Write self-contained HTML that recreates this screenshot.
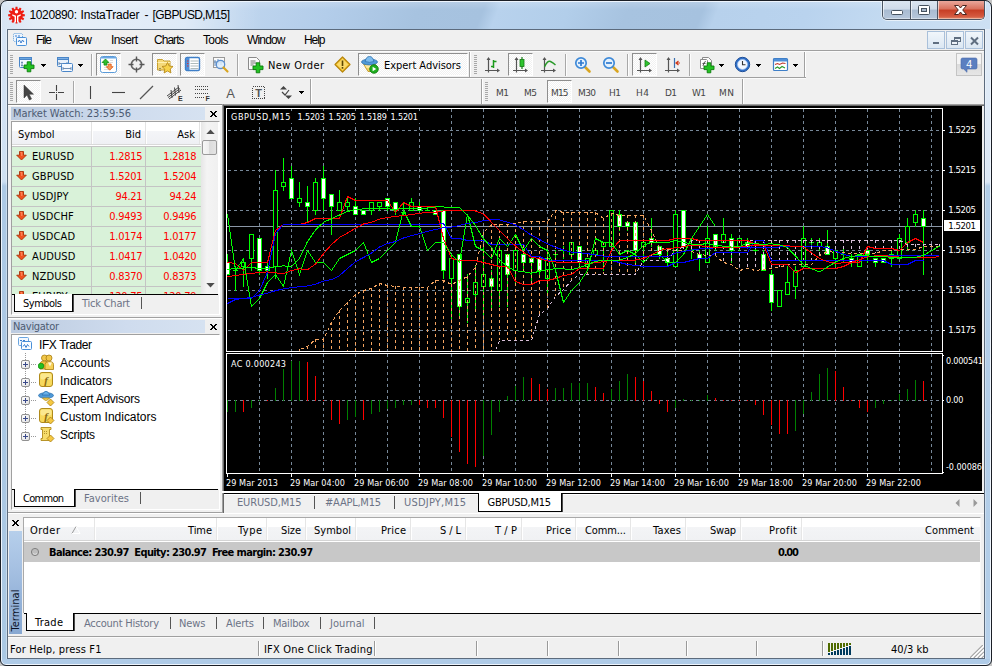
<!DOCTYPE html><html lang="en"><head><meta charset="utf-8"><title>1020890: InstaTrader - [GBPUSD,M15]</title><style>
html,body{margin:0;padding:0;background:#c4c4c4;}
body{width:992px;height:666px;overflow:hidden;position:relative;font-family:"Liberation Sans",sans-serif;font-size:12px;}
#app{position:absolute;left:0;top:0;width:992px;height:666px;overflow:hidden;}
#app div,#app span.t,#app svg.i{position:absolute;}
span.t{white-space:pre;display:block;}
#win{left:0;top:0;width:992px;height:666px;box-sizing:border-box;border:1px solid #1b1f26;border-radius:7px 7px 6px 6px;
 background:#afcbe7;box-shadow:inset 0 0 0 1px rgba(245,250,255,.9);}
#fl{left:2px;top:29px;width:5px;height:630px;background:linear-gradient(#d6e4f4 0,#cfe0f2 150px,#cbddf1 153px,#adc9e5 157px,#aac8e3 100%);box-shadow:inset -1px 0 0 rgba(255,255,255,.35);}
#fr{left:985px;top:29px;width:5px;height:630px;background:linear-gradient(#e0ebf7 0,#dde9f6 153px,#b4cfe9 157px,#b2cde8 560px,#b8d2ec 100%);box-shadow:inset 1px 0 0 rgba(255,255,255,.35);}
#cap{left:2px;top:2px;width:988px;height:27px;border-radius:5px 5px 0 0;
 background:linear-gradient(180deg,rgba(255,255,255,.18),rgba(255,255,255,0) 30%),linear-gradient(112deg,#d5e3f3 0,#c4d9f0 20%,#b3cdea 33%,#a7c3e0 42%,#a6c2df 48.5%,#b8d2ed 50%,#b2ceea 57%,#a7c3e0 63%,#a6c2df 70.5%,#b7d1ec 72%,#b9d3ee 81%,#c3daf1 89%,#cde0f3 100%);}
#glow{left:2px;top:2px;width:260px;height:27px;background:linear-gradient(90deg,rgba(255,255,255,.05) 0,rgba(255,255,255,.4) 12%,rgba(255,255,255,.5) 30%,rgba(255,255,255,.45) 70%,rgba(255,255,255,.1) 92%,rgba(255,255,255,0) 100%);}
#cbtn{left:882px;top:1px;width:103px;height:19px;border:1px solid #4b5563;border-top:none;border-radius:0 0 5px 5px;box-sizing:border-box;overflow:hidden;
 background:linear-gradient(#dce6f1 0,#cfdbe9 45%,#a9bbd1 50%,#b6c7db 100%);box-shadow:0 1px 0 rgba(255,255,255,.6),1px 0 0 rgba(255,255,255,.45),-1px 0 0 rgba(255,255,255,.45);}
#cbtn .cb{top:0;height:18px;border-right:1px solid #4b5563;box-sizing:border-box;box-shadow:inset 1px 0 0 rgba(255,255,255,.6),inset 0 -1px 0 rgba(255,255,255,.4);}
#cbtn .cx{border-right:none;background:linear-gradient(#e9a79b 0,#d8705c 45%,#c63d24 50%,#d4593f 85%,#e08a6a 100%);}
</style></head><body><div id="app">
<div id="win"></div>
<div id="cap"></div><div id="fl"></div><div id="fr"></div>
<div id="glow"></div>
<div style="left:7px;top:29px;width:978px;height:630px;border:1px solid #5c6b7d;box-sizing:border-box;background:#f0f0f0;"></div>
<svg class="i" style="left:6px;top:5px;" width="20" height="20" viewBox="0 0 20 20"><g transform="translate(10.5,10.2)"><polygon points="-0.97,-8.34 0.97,-8.34 1.18,-6.19 2.07,-5.95 3.34,-7.71 5.01,-6.74 4.12,-4.77 4.77,-4.12 6.74,-5.01 7.71,-3.34 5.95,-2.07 6.19,-1.18 8.34,-0.97 8.34,0.97 6.19,1.18 5.95,2.07 7.71,3.34 6.74,5.01 4.77,4.12 4.12,4.77 5.01,6.74 3.34,7.71 2.07,5.95 1.18,6.19 0.97,8.34 -0.97,8.34 -1.18,6.19 -2.07,5.95 -3.34,7.71 -5.01,6.74 -4.12,4.77 -4.77,4.12 -6.74,5.01 -7.71,3.34 -5.95,2.07 -6.19,1.18 -8.34,0.97 -8.34,-0.97 -6.19,-1.18 -5.95,-2.07 -7.71,-3.34 -6.74,-5.01 -4.77,-4.12 -4.12,-4.77 -5.01,-6.74 -3.34,-7.71 -2.07,-5.95 -1.18,-6.19" fill="#ee1c12"/><circle cx="0" cy="-3.4" r="1.7" fill="#fff"/><path d="M-4.2 -0.9 L-0.5 0.5 L-0.5 7.6 L-1.9 6.4 L-1.9 1.5 L-4.2 0.6 Z M4.2 -0.9 L0.5 0.5 L0.5 7.6 L1.9 6.4 L1.9 1.5 L4.2 0.6 Z" fill="#fff"/></g></svg>
<span class="t" style="left:29.50px;top:8px;font-family:'Liberation Sans',sans-serif;font-size:12px;line-height:14px;color:#000;letter-spacing:-0.364px;">1020890: </span>
<span class="t" style="left:80.50px;top:8px;font-family:'Liberation Sans',sans-serif;font-size:12px;line-height:14px;color:#000;letter-spacing:-0.191px;">InstaTrader </span>
<span class="t" style="left:144.50px;top:8px;font-family:'Liberation Sans',sans-serif;font-size:12px;line-height:14px;color:#000;">- </span>
<span class="t" style="left:152.50px;top:8px;font-family:'Liberation Sans',sans-serif;font-size:12px;line-height:14px;color:#000;letter-spacing:-0.593px;">[GBPUSD,M15]</span>
<div id="cbtn"><div class="cb" style="left:0;width:28px"></div><div class="cb" style="left:28px;width:27px"></div><div class="cb cx" style="left:55px;width:47px"></div></div>
<svg class="i" style="left:882px;top:0px;" width="103" height="20" viewBox="0 0 103 20"><rect x="9.500" y="10.500" width="11" height="4" rx="1" fill="#fff" stroke="#46525f" stroke-width="1"/><rect x="36.500" y="5.500" width="11" height="9" rx="1" fill="#fff" stroke="#46525f" stroke-width="1"/><rect x="39.500" y="8.500" width="5" height="3" fill="#a9b8ca" stroke="#46525f" stroke-width="1"/><path d="M72.500 5.500 L76.500 5.500 L78.500 8 L80.500 5.500 L84.500 5.500 L80.700 10 L84.500 14.500 L80.500 14.500 L78.500 12 L76.500 14.500 L72.500 14.500 L76.300 10 Z" fill="#fff" stroke="#4a2620" stroke-width="1" stroke-linejoin="round"/></svg>
<div style="left:8px;top:50px;width:976px;height:1px;background:#a0a0a0;"></div>
<svg class="i" style="left:11px;top:31px;" width="18" height="18" viewBox="0 0 18 18"><rect x="2.5" y="2.5" width="9" height="8" rx="1" fill="#eef5fd" stroke="#5b9bd8" stroke-dasharray="1 1"/><rect x="5.5" y="6.5" width="10" height="8" rx="1" fill="#f6faff" stroke="#4a90d8"/><path d="M7 11 l1.5 -2 l1.5 3 l1.5 -3 l1.5 2" fill="none" stroke="#3a7fd0" stroke-width="1"/><path d="M4 5 h2 M7 5 h2" stroke="#3a7fd0" stroke-width="1"/></svg>
<span class="t" style="left:36.00px;top:33px;font-family:'Liberation Sans',sans-serif;font-size:12px;line-height:14px;color:#000;letter-spacing:-1.112px;">File</span>
<span class="t" style="left:69.00px;top:33px;font-family:'Liberation Sans',sans-serif;font-size:12px;line-height:14px;color:#000;letter-spacing:-0.931px;">View</span>
<span class="t" style="left:111.00px;top:33px;font-family:'Liberation Sans',sans-serif;font-size:12px;line-height:14px;color:#000;letter-spacing:-0.602px;">Insert</span>
<span class="t" style="left:154.00px;top:33px;font-family:'Liberation Sans',sans-serif;font-size:12px;line-height:14px;color:#000;letter-spacing:-0.969px;">Charts</span>
<span class="t" style="left:203.00px;top:33px;font-family:'Liberation Sans',sans-serif;font-size:12px;line-height:14px;color:#000;letter-spacing:-0.628px;">Tools</span>
<span class="t" style="left:247.00px;top:33px;font-family:'Liberation Sans',sans-serif;font-size:12px;line-height:14px;color:#000;letter-spacing:-0.836px;">Window</span>
<span class="t" style="left:304.00px;top:33px;font-family:'Liberation Sans',sans-serif;font-size:12px;line-height:14px;color:#000;letter-spacing:-1.060px;">Help</span>
<div style="left:927px;top:31px;width:18px;height:18px;background:linear-gradient(#f1f6fb,#dbe7f3);border:1px solid #a9c0da;box-sizing:border-box;"></div>
<div style="left:946px;top:31px;width:18px;height:18px;background:linear-gradient(#f1f6fb,#dbe7f3);border:1px solid #a9c0da;box-sizing:border-box;"></div>
<div style="left:965px;top:31px;width:18px;height:18px;background:linear-gradient(#f1f6fb,#dbe7f3);border:1px solid #a9c0da;box-sizing:border-box;"></div>
<svg class="i" style="left:927.5px;top:32px;" width="55" height="17" viewBox="0 0 55 17"><rect x="5" y="10" width="6" height="2" fill="#5f6e80"/><rect x="26.5" y="5.500" width="6" height="4" fill="none" stroke="#5f6e80"/><rect x="26" y="5" width="7" height="2" fill="#5f6e80"/><rect x="23.5" y="8.5" width="6" height="4" fill="#eef3f9" stroke="#5f6e80"/><rect x="23" y="8" width="7" height="2" fill="#5f6e80"/><path d="M43 5.500 L50 12.5 M50 5.500 L43 12.5" stroke="#5f6e80" stroke-width="2"/></svg>
<div style="left:8px;top:51px;width:976px;height:1px;background:#fbfbfb;"></div>
<div style="left:8px;top:77px;width:798px;height:1px;background:#a0a0a0;"></div>
<div style="left:8px;top:78px;width:798px;height:1px;background:#fbfbfb;"></div>
<svg class="i" style="left:10px;top:55px;" width="3" height="20" viewBox="0 0 3 20"><rect x="0" y="0" width="3" height="1" fill="#a8a8a8"/><rect x="0" y="2" width="3" height="1" fill="#a8a8a8"/><rect x="0" y="4" width="3" height="1" fill="#a8a8a8"/><rect x="0" y="6" width="3" height="1" fill="#a8a8a8"/><rect x="0" y="8" width="3" height="1" fill="#a8a8a8"/><rect x="0" y="10" width="3" height="1" fill="#a8a8a8"/><rect x="0" y="12" width="3" height="1" fill="#a8a8a8"/><rect x="0" y="14" width="3" height="1" fill="#a8a8a8"/><rect x="0" y="16" width="3" height="1" fill="#a8a8a8"/><rect x="0" y="18" width="3" height="1" fill="#a8a8a8"/></svg>
<svg class="i" style="left:18px;top:56px;overflow:visible;" width="17" height="17" viewBox="0 0 17 17"><rect x="1.5" y="1.5" width="12" height="10" rx="1" fill="#f4f9ff" stroke="#4a86c8"/><rect x="1.5" y="1.5" width="12" height="2" fill="#6aa5e0" stroke="#4a86c8"/><path d="M4 5.500v5 M3 6.500h2 M3 9.500h2" stroke="#6f8fb5" stroke-width="1" fill="none"/><path d="M6 9h3.200v-3.200h3.600v3.200h3.200v3.600h-3.200v3.200h-3.600v-3.200h-3.200z" fill="#22c322" stroke="#0a7a0a" stroke-width="0.9" stroke-linejoin="round"/></svg>
<svg class="i" style="left:41px;top:64px;shape-rendering:crispEdges;" width="5" height="3" viewBox="0 0 5 3"><rect x="0" y="0" width="5" height="1"/><rect x="1" y="1" width="3" height="1"/><rect x="2" y="2" width="1" height="1"/></svg>
<svg class="i" style="left:56px;top:56px;overflow:visible;" width="17" height="17" viewBox="0 0 17 17"><rect x="1.5" y="1.5" width="11" height="9" rx="1" fill="#e8f1fb" stroke="#4a86c8"/><rect x="1.5" y="1.5" width="11" height="2" fill="#7fb0e4" stroke="#4a86c8"/><path d="M3 7.500h8 M3 6v3 M11 6v3" stroke="#6f8fb5" fill="none"/><rect x="5.5" y="7.5" width="11" height="8" rx="1" fill="#f4f9ff" stroke="#4a86c8"/><path d="M7 12.500h8 M7 11v3 M15 11v3" stroke="#6f8fb5" fill="none"/></svg>
<svg class="i" style="left:78px;top:64px;shape-rendering:crispEdges;" width="5" height="3" viewBox="0 0 5 3"><rect x="0" y="0" width="5" height="1"/><rect x="1" y="1" width="3" height="1"/><rect x="2" y="2" width="1" height="1"/></svg>
<div style="left:91px;top:54px;width:1px;height:22px;background:#a8a8a8;"></div>
<div style="left:92px;top:54px;width:1px;height:22px;background:#fdfdfd;"></div>
<div style="left:96px;top:53px;width:25px;height:23px;background:#fff;border:1px solid #8e8e8e;border-right-color:#fff;border-bottom-color:#fff;box-sizing:border-box;background-image:repeating-conic-gradient(#ffffff 0% 25%, #f1f1f1 0% 50%);background-size:2px 2px;"></div>
<svg class="i" style="left:100px;top:56px;overflow:visible;" width="17" height="17" viewBox="0 0 17 17"><rect x="0.500" y="0.500" width="16" height="16" rx="2" fill="#fff" stroke="#5b9bd8" stroke-width="1"/><rect x="1" y="1" width="15" height="1.500" fill="#6aa8e4"/><path d="M4 11.500h5 M4 13.500h5 M10 4.500h3 M10 6.500h3" stroke="#dcdcdc" stroke-width="1"/><path d="M5.500 3 l3.400 3.500 h-1.900 v2.600 h-3 v-2.600 h-1.900 z" fill="#2fbe2f" stroke="#128a12" stroke-width="0.8" stroke-linejoin="round"/><path d="M9.700 14.200 l3.400 -3.500 h-1.900 v-2.600 h-3 v2.600 h-1.900 z" fill="#f59a5a" stroke="#e0560f" stroke-width="0.8" stroke-linejoin="round"/></svg>
<svg class="i" style="left:128px;top:56px;overflow:visible;" width="17" height="17" viewBox="0 0 17 17"><circle cx="8.5" cy="8.5" r="5.200" fill="none" stroke="#666" stroke-width="1.6"/><path d="M8.500 0.500v5 M8.500 11.500v5 M0.500 8.500h5 M11.500 8.500h5" stroke="#555" stroke-width="1.4"/></svg>
<div style="left:152px;top:53px;width:25px;height:23px;background:#fff;border:1px solid #8e8e8e;border-right-color:#fff;border-bottom-color:#fff;box-sizing:border-box;background-image:repeating-conic-gradient(#ffffff 0% 25%, #f1f1f1 0% 50%);background-size:2px 2px;"></div>
<svg class="i" style="left:156px;top:56px;overflow:visible;" width="17" height="17" viewBox="0 0 17 17"><path d="M1.500 3.500 h5 l1.500 1.500 h6 v9 h-12.500 z" fill="#f5d978" stroke="#c8a030"/><path d="M1.500 6.500 h12.500" stroke="#fff0b0"/><path d="M4 12 v4" stroke="#444" stroke-dasharray="1 1"/><path d="M11.500 6.500 l1.700 3.500 3.800 0.500 -2.800 2.600 0.700 3.800 -3.400 -1.900 -3.400 1.900 0.700 -3.800 -2.800 -2.600 3.800 -0.500z" fill="#f7d24a" stroke="#b88a1a" stroke-width="0.9"/></svg>
<div style="left:180px;top:53px;width:25px;height:23px;background:#fff;border:1px solid #8e8e8e;border-right-color:#fff;border-bottom-color:#fff;box-sizing:border-box;background-image:repeating-conic-gradient(#ffffff 0% 25%, #f1f1f1 0% 50%);background-size:2px 2px;"></div>
<svg class="i" style="left:184px;top:56px;overflow:visible;" width="17" height="17" viewBox="0 0 17 17"><rect x="1.5" y="1.5" width="14" height="13" rx="1.5" fill="#fff" stroke="#3f7fc8" stroke-width="1.4"/><rect x="2" y="2" width="3.500" height="12" fill="#4f8fd8"/><path d="M6.500 5h8 M6.500 7.500h8 M6.500 10h8 M6.500 12.500h8" stroke="#9aa" stroke-width="0.8"/><path d="M3 5h1.500 M3 7.500h1.500 M3 10h1.500" stroke="#d33" stroke-width="1"/></svg>
<svg class="i" style="left:212px;top:56px;overflow:visible;" width="17" height="17" viewBox="0 0 17 17"><rect x="1.5" y="1.5" width="11" height="10" fill="#fafafa" stroke="#999"/><path d="M3 4v6 M6 3v6 M9 4v5 M2 6h9" stroke="#5580b0" stroke-width="0.9"/><circle cx="8.5" cy="8.5" r="4.200" fill="#dcecfb" fill-opacity="0.85" stroke="#5b8fd0" stroke-width="1.3"/><path d="M11.500 11.500 l4 4" stroke="#d9a520" stroke-width="2.200" stroke-linecap="round"/></svg>
<div style="left:237px;top:54px;width:1px;height:22px;background:#a8a8a8;"></div>
<div style="left:238px;top:54px;width:1px;height:22px;background:#fdfdfd;"></div>
<svg class="i" style="left:246px;top:56px;overflow:visible;" width="17" height="17" viewBox="0 0 17 17"><path d="M2.500 1.500 h8 l3 3 v9 h-11 z" fill="#fbfbfb" stroke="#8a8a8a"/><path d="M4.500 5h5 M4.500 7h6 M4.500 9h3" stroke="#777" stroke-width="1"/><path d="M7 10h3.200v-3.200h3.600v3.200h3.200v3.600h-3.200v3.200h-3.600v-3.200h-3.200z" fill="#22c322" stroke="#0a7a0a" stroke-width="0.9" stroke-linejoin="round"/></svg>
<span class="t" style="left:268.00px;top:59px;font-family:'DejaVu Sans Condensed','Liberation Sans',sans-serif;font-size:11px;line-height:13px;color:#000;letter-spacing:0.396px;">New Order</span>
<svg class="i" style="left:334px;top:56px;overflow:visible;" width="17" height="17" viewBox="0 0 17 17"><path d="M8.500 1 L16 8.500 L8.500 16 L1 8.500 Z" fill="#f7c93a" stroke="#b8860b" stroke-width="1.200" stroke-linejoin="round"/><path d="M8.500 3 L14 8.500 L8.500 14 L3 8.500 Z" fill="#fde68a" fill-opacity="0.6"/><rect x="7.700" y="4.500" width="1.600" height="5.500" fill="#5a4500"/><rect x="7.700" y="11" width="1.600" height="1.700" fill="#5a4500"/></svg>
<div style="left:358px;top:53px;width:110px;height:23px;background:#fff;border:1px solid #8e8e8e;border-right-color:#fff;border-bottom-color:#fff;box-sizing:border-box;background-image:repeating-conic-gradient(#ffffff 0% 25%, #f1f1f1 0% 50%);background-size:2px 2px;"></div>
<svg class="i" style="left:361px;top:56px;overflow:visible;" width="18" height="18" viewBox="0 0 18 18"><path d="M2.500 8 h12 l-2.500 7.500 h-5 z" fill="#f5d060" stroke="#b8901a" stroke-width="0.8"/><path d="M4 9 h6 l-1 3 h-3.500 z" fill="#fbe9a0"/><ellipse cx="8.500" cy="6" rx="8" ry="2.900" fill="#4f9ad8" stroke="#2f72b0" stroke-width="0.8"/><path d="M4.200 5.500 q0.800 -5 4.300 -5 q3.500 0 4.300 5 q-4.300 1.800 -8.600 0 z" fill="#7cbcee" stroke="#2f72b0" stroke-width="0.8"/><circle cx="13" cy="13" r="4.300" fill="#1fae1f" stroke="#0d7a0d" stroke-width="0.8"/><path d="M11.600 10.700 l3.700 2.300 l-3.700 2.300 z" fill="#fff"/></svg>
<span class="t" style="left:384.00px;top:59px;font-family:'DejaVu Sans Condensed','Liberation Sans',sans-serif;font-size:11px;line-height:13px;color:#000;letter-spacing:-0.033px;">Expert Advisors</span>
<div style="left:469px;top:52px;width:1px;height:25px;background:#a0a0a0;"></div>
<div style="left:470px;top:52px;width:1px;height:25px;background:#fff;"></div>
<svg class="i" style="left:474px;top:55px;" width="3" height="20" viewBox="0 0 3 20"><rect x="0" y="0" width="3" height="1" fill="#a8a8a8"/><rect x="0" y="2" width="3" height="1" fill="#a8a8a8"/><rect x="0" y="4" width="3" height="1" fill="#a8a8a8"/><rect x="0" y="6" width="3" height="1" fill="#a8a8a8"/><rect x="0" y="8" width="3" height="1" fill="#a8a8a8"/><rect x="0" y="10" width="3" height="1" fill="#a8a8a8"/><rect x="0" y="12" width="3" height="1" fill="#a8a8a8"/><rect x="0" y="14" width="3" height="1" fill="#a8a8a8"/><rect x="0" y="16" width="3" height="1" fill="#a8a8a8"/><rect x="0" y="18" width="3" height="1" fill="#a8a8a8"/></svg>
<svg class="i" style="left:484px;top:56px;overflow:visible;" width="17" height="17" viewBox="0 0 17 17"><path d="M4.500 2.500 v14 M1 14.500 h14" stroke="#555" stroke-width="1.200" fill="none"/><path d="M4.500 1 l-2 3 h4 z M16 14.500 l-3 -2 v4 z" fill="#555"/><path d="M9.500 4 v8 M9.500 5.500 h3 M7 10.500 h2.500" stroke="#1a9a1a" stroke-width="1.500" fill="none"/></svg>
<div style="left:508px;top:53px;width:25px;height:23px;background:#fff;border:1px solid #8e8e8e;border-right-color:#fff;border-bottom-color:#fff;box-sizing:border-box;background-image:repeating-conic-gradient(#ffffff 0% 25%, #f1f1f1 0% 50%);background-size:2px 2px;"></div>
<svg class="i" style="left:512px;top:56px;overflow:visible;" width="17" height="17" viewBox="0 0 17 17"><path d="M4.500 2.500 v14 M1 14.500 h14" stroke="#555" stroke-width="1.200" fill="none"/><path d="M4.500 1 l-2 3 h4 z M16 14.500 l-3 -2 v4 z" fill="#555"/><path d="M10 1 v12" stroke="#157a15" stroke-width="1.200"/><rect x="8" y="3.500" width="4" height="7" fill="#2fc52f" stroke="#157a15" stroke-width="0.8"/></svg>
<svg class="i" style="left:540px;top:56px;overflow:visible;" width="17" height="17" viewBox="0 0 17 17"><path d="M4.500 2.500 v14 M1 14.500 h14" stroke="#555" stroke-width="1.200" fill="none"/><path d="M4.500 1 l-2 3 h4 z M16 14.500 l-3 -2 v4 z" fill="#555"/><path d="M4.500 11 q3 -7 6 -5.500 t5 3.500" stroke="#2a9a2a" stroke-width="1.400" fill="none"/></svg>
<div style="left:565px;top:54px;width:1px;height:22px;background:#a8a8a8;"></div>
<div style="left:566px;top:54px;width:1px;height:22px;background:#fdfdfd;"></div>
<svg class="i" style="left:574px;top:56px;overflow:visible;" width="17" height="17" viewBox="0 0 17 17"><path d="M11 11 l4.500 4.500" stroke="#d9a520" stroke-width="2.600" stroke-linecap="round"/><circle cx="7" cy="7" r="5.200" fill="#e4f1fd" stroke="#3f8ad8" stroke-width="1.700"/><path d="M4 7h6 M7 4v6" stroke="#2f7ad0" stroke-width="1.700"/></svg>
<svg class="i" style="left:602px;top:56px;overflow:visible;" width="17" height="17" viewBox="0 0 17 17"><path d="M11 11 l4.500 4.500" stroke="#d9a520" stroke-width="2.600" stroke-linecap="round"/><circle cx="7" cy="7" r="5.200" fill="#e4f1fd" stroke="#3f8ad8" stroke-width="1.700"/><path d="M4 7h6" stroke="#2f7ad0" stroke-width="1.700"/></svg>
<div style="left:627px;top:54px;width:1px;height:22px;background:#a8a8a8;"></div>
<div style="left:628px;top:54px;width:1px;height:22px;background:#fdfdfd;"></div>
<div style="left:632px;top:53px;width:25px;height:23px;background:#fff;border:1px solid #8e8e8e;border-right-color:#fff;border-bottom-color:#fff;box-sizing:border-box;background-image:repeating-conic-gradient(#ffffff 0% 25%, #f1f1f1 0% 50%);background-size:2px 2px;"></div>
<svg class="i" style="left:636px;top:56px;overflow:visible;" width="17" height="17" viewBox="0 0 17 17"><path d="M4.500 2.500 v14 M1 14.500 h14" stroke="#555" stroke-width="1.200" fill="none"/><path d="M4.500 1 l-2 3 h4 z M16 14.500 l-3 -2 v4 z" fill="#555"/><path d="M9 4 l5 3.500 l-5 3.500 z" fill="#2fc52f" stroke="#157a15" stroke-width="0.8"/></svg>
<svg class="i" style="left:664px;top:56px;overflow:visible;" width="17" height="17" viewBox="0 0 17 17"><path d="M4.500 2.500 v14 M1 14.500 h14" stroke="#555" stroke-width="1.200" fill="none"/><path d="M4.500 1 l-2 3 h4 z M16 14.500 l-3 -2 v4 z" fill="#555"/><path d="M10.500 2 v10" stroke="#3a6fb0" stroke-width="1.200"/><path d="M16 7 h-3.500 M14.500 5 l-2.500 2 l2.500 2" stroke="#d03a1a" stroke-width="1.200" fill="none"/></svg>
<div style="left:689px;top:54px;width:1px;height:22px;background:#a8a8a8;"></div>
<div style="left:690px;top:54px;width:1px;height:22px;background:#fdfdfd;"></div>
<svg class="i" style="left:698px;top:56px;overflow:visible;" width="17" height="17" viewBox="0 0 17 17"><path d="M4.500 1.500 h6 l3 3 v8 h-9 z" fill="#fbfbfb" stroke="#8a8a8a"/><path d="M2.500 3.500 h6 l1 1 v8 h-7 z" fill="#fff" stroke="#8a8a8a"/><path d="M5 10 q1.500 -6 3 -4 M4.500 7.500 h3" stroke="#555" stroke-width="1" fill="none"/><path d="M6 10h3.200v-3.200h3.600v3.200h3.200v3.600h-3.200v3.200h-3.600v-3.200h-3.200z" fill="#22c322" stroke="#0a7a0a" stroke-width="0.9" stroke-linejoin="round"/></svg>
<svg class="i" style="left:719px;top:64px;shape-rendering:crispEdges;" width="5" height="3" viewBox="0 0 5 3"><rect x="0" y="0" width="5" height="1"/><rect x="1" y="1" width="3" height="1"/><rect x="2" y="2" width="1" height="1"/></svg>
<svg class="i" style="left:734px;top:56px;overflow:visible;" width="17" height="17" viewBox="0 0 17 17"><circle cx="8.500" cy="8.500" r="7.200" fill="#2f6fc8" stroke="#1f4f98" stroke-width="1"/><circle cx="8.500" cy="8.500" r="5" fill="#f4f8ff" stroke="#9ec0ee" stroke-width="0.8"/><path d="M8.500 5 v3.700 h3" stroke="#333" stroke-width="1.100" fill="none"/></svg>
<svg class="i" style="left:756px;top:64px;shape-rendering:crispEdges;" width="5" height="3" viewBox="0 0 5 3"><rect x="0" y="0" width="5" height="1"/><rect x="1" y="1" width="3" height="1"/><rect x="2" y="2" width="1" height="1"/></svg>
<svg class="i" style="left:772px;top:56px;overflow:visible;" width="17" height="17" viewBox="0 0 17 17"><rect x="1.500" y="2.500" width="14" height="12" rx="1" fill="#fff" stroke="#3f7fc8" stroke-width="1.200"/><rect x="2" y="3" width="13" height="2.500" fill="#4f8fd8"/><path d="M3 8.500 l2.500 -1 2 1 3 -1.500 3 0.500" stroke="#c0392b" stroke-width="1.100" fill="none"/><path d="M3 12.500 l2.500 -1.500 2 1.500 2.500 -2 3 1.500" stroke="#2a9a2a" stroke-width="1.100" fill="none"/></svg>
<svg class="i" style="left:793px;top:64px;shape-rendering:crispEdges;" width="5" height="3" viewBox="0 0 5 3"><rect x="0" y="0" width="5" height="1"/><rect x="1" y="1" width="3" height="1"/><rect x="2" y="2" width="1" height="1"/></svg>
<div style="left:804px;top:52px;width:1px;height:25px;background:#a0a0a0;"></div>
<div style="left:805px;top:52px;width:1px;height:25px;background:#fff;"></div>
<div style="left:956px;top:53px;width:26px;height:23px;background:linear-gradient(#f4f4f4 50%,#dcdcdc 50%,#e6e6e6);border:1px solid #c4c4c4;box-sizing:border-box;"></div>
<svg class="i" style="left:960px;top:57px;" width="18" height="16" viewBox="0 0 18 16"><path d="M2.500 1 h13 q1.500 0 1.500 1.500 v8 q0 1.500 -1.500 1.500 h-8.500 v3.300 l-3.300 -3.300 h-1.200 q-1.500 0 -1.500 -1.500 v-8 q0 -1.500 1.500 -1.500 z" fill="#5b7fc0" stroke="#4a6aa8" stroke-width="0.6"/><text x="9.200" y="10.500" font-family="Liberation Sans,sans-serif" font-size="10.500" fill="#fff" text-anchor="middle">4</text></svg>
<svg class="i" style="left:10px;top:82px;" width="3" height="20" viewBox="0 0 3 20"><rect x="0" y="0" width="3" height="1" fill="#a8a8a8"/><rect x="0" y="2" width="3" height="1" fill="#a8a8a8"/><rect x="0" y="4" width="3" height="1" fill="#a8a8a8"/><rect x="0" y="6" width="3" height="1" fill="#a8a8a8"/><rect x="0" y="8" width="3" height="1" fill="#a8a8a8"/><rect x="0" y="10" width="3" height="1" fill="#a8a8a8"/><rect x="0" y="12" width="3" height="1" fill="#a8a8a8"/><rect x="0" y="14" width="3" height="1" fill="#a8a8a8"/><rect x="0" y="16" width="3" height="1" fill="#a8a8a8"/><rect x="0" y="18" width="3" height="1" fill="#a8a8a8"/></svg>
<div style="left:16px;top:80px;width:25px;height:23px;background:#fff;border:1px solid #8e8e8e;border-right-color:#fff;border-bottom-color:#fff;box-sizing:border-box;background-image:repeating-conic-gradient(#ffffff 0% 25%, #f1f1f1 0% 50%);background-size:2px 2px;"></div>
<svg class="i" style="left:20px;top:84px;overflow:visible;" width="17" height="17" viewBox="0 0 17 17"><path d="M4 1 v13 l3 -3 l2.300 5 l2.200 -1 l-2.300 -4.800 h4.300 z" fill="#444" stroke="#333" stroke-width="0.5"/></svg>
<svg class="i" style="left:48px;top:84px;overflow:visible;" width="17" height="17" viewBox="0 0 17 17"><path d="M8.500 1 v6 M8.500 10 v6 M1 8.500 h6 M10 8.500 h6" stroke="#444" stroke-width="1.100"/><rect x="8" y="8" width="1" height="1" fill="#444"/></svg>
<div style="left:73px;top:81px;width:1px;height:22px;background:#a8a8a8;"></div>
<div style="left:74px;top:81px;width:1px;height:22px;background:#fdfdfd;"></div>
<svg class="i" style="left:82px;top:84px;overflow:visible;" width="17" height="17" viewBox="0 0 17 17"><path d="M8.500 2 v13" stroke="#444" stroke-width="1.100"/></svg>
<svg class="i" style="left:110px;top:84px;overflow:visible;" width="17" height="17" viewBox="0 0 17 17"><path d="M2 8.500 h13" stroke="#444" stroke-width="1.100"/></svg>
<svg class="i" style="left:138px;top:84px;overflow:visible;" width="17" height="17" viewBox="0 0 17 17"><path d="M2 15 L15 2" stroke="#555" stroke-width="1.200"/></svg>
<svg class="i" style="left:166px;top:84px;overflow:visible;" width="17" height="17" viewBox="0 0 17 17"><path d="M1 12 L13 3 M3 15 L15 6 M2 13.500 L14 4.500" stroke="#444" stroke-width="1"/><path d="M5 6 l1 8 M8.500 3.500 l1 8 M12 1 l1 8" stroke="#444" stroke-width="1"/><text x="12" y="17" font-family="Liberation Sans,sans-serif" font-size="7" font-weight="bold" fill="#333">E</text></svg>
<svg class="i" style="left:194px;top:84px;overflow:visible;" width="17" height="17" viewBox="0 0 17 17"><path d="M1 2.500 h14 M1 5.500 h14 M1 9.500 h14 M1 13.500 h10" stroke="#444" stroke-width="1" stroke-dasharray="1 1"/><text x="11.500" y="17" font-family="Liberation Sans,sans-serif" font-size="7" font-weight="bold" fill="#333">F</text></svg>
<svg class="i" style="left:222px;top:84px;overflow:visible;" width="17" height="17" viewBox="0 0 17 17"><text x="8.500" y="14" font-family="Liberation Sans,sans-serif" font-size="13" fill="#555" text-anchor="middle">A</text></svg>
<svg class="i" style="left:250px;top:84px;overflow:visible;" width="17" height="17" viewBox="0 0 17 17"><rect x="2.500" y="2.500" width="12" height="12" fill="none" stroke="#444" stroke-width="1" stroke-dasharray="1 1" shape-rendering="crispEdges"/><text x="8.500" y="13" font-family="Liberation Sans,sans-serif" font-size="11" font-weight="bold" fill="#555" text-anchor="middle">T</text></svg>
<svg class="i" style="left:278px;top:84px;overflow:visible;" width="17" height="17" viewBox="0 0 17 17"><path d="M2 5.500 l3.500 -3.500 l3.500 3.500 z M14 11.500 l-3.500 3.500 l-3.500 -3.500 z" fill="#444"/><path d="M4 8 l3 3 l4 -5" stroke="#444" stroke-width="1.200" fill="none"/></svg>
<svg class="i" style="left:299px;top:91px;shape-rendering:crispEdges;" width="5" height="3" viewBox="0 0 5 3"><rect x="0" y="0" width="5" height="1"/><rect x="1" y="1" width="3" height="1"/><rect x="2" y="2" width="1" height="1"/></svg>
<div style="left:310px;top:79px;width:1px;height:25px;background:#a0a0a0;"></div>
<div style="left:311px;top:79px;width:1px;height:25px;background:#fff;"></div>
<div style="left:481px;top:79px;width:1px;height:25px;background:#a0a0a0;"></div>
<div style="left:482px;top:79px;width:1px;height:25px;background:#fff;"></div>
<svg class="i" style="left:485px;top:82px;" width="3" height="20" viewBox="0 0 3 20"><rect x="0" y="0" width="3" height="1" fill="#a8a8a8"/><rect x="0" y="2" width="3" height="1" fill="#a8a8a8"/><rect x="0" y="4" width="3" height="1" fill="#a8a8a8"/><rect x="0" y="6" width="3" height="1" fill="#a8a8a8"/><rect x="0" y="8" width="3" height="1" fill="#a8a8a8"/><rect x="0" y="10" width="3" height="1" fill="#a8a8a8"/><rect x="0" y="12" width="3" height="1" fill="#a8a8a8"/><rect x="0" y="14" width="3" height="1" fill="#a8a8a8"/><rect x="0" y="16" width="3" height="1" fill="#a8a8a8"/><rect x="0" y="18" width="3" height="1" fill="#a8a8a8"/></svg>
<div style="left:547px;top:80px;width:25px;height:23px;background:#fff;border:1px solid #8e8e8e;border-right-color:#fff;border-bottom-color:#fff;box-sizing:border-box;background-image:repeating-conic-gradient(#ffffff 0% 25%, #f1f1f1 0% 50%);background-size:2px 2px;"></div>
<span class="t" style="left:496.00px;top:88px;font-family:'DejaVu Sans','Liberation Sans',sans-serif;font-size:9px;line-height:10px;color:#454545;letter-spacing:-0.491px;">M1</span>
<span class="t" style="left:524.00px;top:88px;font-family:'DejaVu Sans','Liberation Sans',sans-serif;font-size:9px;line-height:10px;color:#454545;letter-spacing:-0.491px;">M5</span>
<span class="t" style="left:551.00px;top:88px;font-family:'DejaVu Sans','Liberation Sans',sans-serif;font-size:9px;line-height:10px;color:#454545;letter-spacing:-0.859px;">M15</span>
<span class="t" style="left:578.00px;top:88px;font-family:'DejaVu Sans','Liberation Sans',sans-serif;font-size:9px;line-height:10px;color:#454545;letter-spacing:-0.609px;">M30</span>
<span class="t" style="left:609.00px;top:88px;font-family:'DejaVu Sans','Liberation Sans',sans-serif;font-size:9px;line-height:10px;color:#454545;letter-spacing:-0.494px;">H1</span>
<span class="t" style="left:636.00px;top:88px;font-family:'DejaVu Sans','Liberation Sans',sans-serif;font-size:9px;line-height:10px;color:#454545;letter-spacing:0.506px;">H4</span>
<span class="t" style="left:665.00px;top:88px;font-family:'DejaVu Sans','Liberation Sans',sans-serif;font-size:9px;line-height:10px;color:#454545;letter-spacing:-0.656px;">D1</span>
<span class="t" style="left:692.00px;top:88px;font-family:'DejaVu Sans','Liberation Sans',sans-serif;font-size:9px;line-height:10px;color:#454545;letter-spacing:-0.625px;">W1</span>
<span class="t" style="left:719.00px;top:88px;font-family:'DejaVu Sans','Liberation Sans',sans-serif;font-size:9px;line-height:10px;color:#454545;letter-spacing:0.502px;">MN</span>
<div style="left:742px;top:79px;width:1px;height:25px;background:#a0a0a0;"></div>
<div style="left:743px;top:79px;width:1px;height:25px;background:#fff;"></div>
<div style="left:8px;top:104px;width:976px;height:1px;background:#858585;"></div>
<div style="left:8px;top:105px;width:214px;height:1px;background:#fff;"></div>
<div style="left:11px;top:107px;width:194px;height:13px;background:linear-gradient(90deg,#bccbe0,#cfdcee 60%,#d6e2f1);"></div>
<span class="t" style="left:13.00px;top:107px;font-family:'DejaVu Sans Condensed','Liberation Sans',sans-serif;font-size:11px;line-height:13px;color:#4d5b72;letter-spacing:-0.037px;">Market Watch: 23:59:56</span>
<svg class="i" style="left:210px;top:111px;shape-rendering:crispEdges;" width="7" height="6" viewBox="0 0 7 6"><rect x="0" y="0" width="2" height="1"/><rect x="5" y="0" width="2" height="1"/><rect x="1" y="1" width="2" height="1"/><rect x="4" y="1" width="2" height="1"/><rect x="2" y="2" width="3" height="1"/><rect x="2" y="3" width="3" height="1"/><rect x="1" y="4" width="2" height="1"/><rect x="4" y="4" width="2" height="1"/><rect x="0" y="5" width="2" height="1"/><rect x="5" y="5" width="2" height="1"/></svg>
<div style="left:11px;top:121px;width:209px;height:194px;background:#f0f0f0;border:1px solid #a0a0a0;border-right-color:#fff;border-bottom-color:#fff;box-sizing:border-box;"></div>
<div style="left:12px;top:122px;width:207px;height:172px;background:#fff;"></div>
<div style="left:12px;top:122px;width:189px;height:22px;background:linear-gradient(#fff 40%,#f4f5f8 41%,#eff0f4);"></div>
<div style="left:12px;top:144px;width:189px;height:1px;background:#d9d9d9;"></div>
<div style="left:12px;top:145px;width:189px;height:1px;background:#fff;"></div>
<div style="left:92px;top:122px;width:1px;height:22px;background:#fff;"></div>
<div style="left:91px;top:122px;width:1px;height:22px;background:#e3e3e3;"></div>
<div style="left:146px;top:122px;width:1px;height:22px;background:#fff;"></div>
<div style="left:145px;top:122px;width:1px;height:22px;background:#e3e3e3;"></div>
<div style="left:200px;top:122px;width:1px;height:22px;background:#fff;"></div>
<div style="left:199px;top:122px;width:1px;height:22px;background:#e3e3e3;"></div>
<span class="t" style="left:18.00px;top:128px;font-family:'DejaVu Sans Condensed','Liberation Sans',sans-serif;font-size:11px;line-height:13px;color:#000;letter-spacing:-0.073px;">Symbol</span>
<span class="t" style="left:125.18px;top:128px;font-family:'DejaVu Sans Condensed','Liberation Sans',sans-serif;font-size:11px;line-height:13px;color:#000;">Bid</span>
<span class="t" style="left:177.35px;top:128px;font-family:'DejaVu Sans Condensed','Liberation Sans',sans-serif;font-size:11px;line-height:13px;color:#000;">Ask</span>
<div style="left:12px;top:146px;width:189px;height:148px;overflow:hidden;background:#d9f2d9">
<div style="left:0px;top:0px;width:189px;height:1px;background:#c4c4c4;"></div>
<svg class="i" style="left:4px;top:5px;" width="11" height="12" viewBox="0 0 11 12"><path d="M3.500 0.500 h4 v3.700 h2.800 l-4.800 4.800 l-4.800 -4.800 h2.800 z" fill="#f4511e" stroke="#a83208" stroke-width="0.9" stroke-linejoin="round"/><path d="M4.500 1.400 h1.300 v3.600" stroke="#ff9a6e" stroke-width="0.9" fill="none"/></svg>
<span class="t" style="left:20.00px;top:4px;font-family:'DejaVu Sans Condensed','Liberation Sans',sans-serif;font-size:11px;line-height:13px;color:#000;letter-spacing:0.120px;">EURUSD</span>
<span class="t" style="left:97.28px;top:4px;font-family:'DejaVu Sans Condensed','Liberation Sans',sans-serif;font-size:11px;line-height:13px;color:#ff0000;letter-spacing:-0.280px;">1.2815</span>
<span class="t" style="left:151.28px;top:4px;font-family:'DejaVu Sans Condensed','Liberation Sans',sans-serif;font-size:11px;line-height:13px;color:#ff0000;letter-spacing:-0.280px;">1.2818</span>
<div style="left:0px;top:20px;width:189px;height:1px;background:#c4c4c4;"></div>
<svg class="i" style="left:4px;top:25px;" width="11" height="12" viewBox="0 0 11 12"><path d="M3.500 0.500 h4 v3.700 h2.800 l-4.800 4.800 l-4.800 -4.800 h2.800 z" fill="#f4511e" stroke="#a83208" stroke-width="0.9" stroke-linejoin="round"/><path d="M4.500 1.400 h1.300 v3.600" stroke="#ff9a6e" stroke-width="0.9" fill="none"/></svg>
<span class="t" style="left:20.00px;top:24px;font-family:'DejaVu Sans Condensed','Liberation Sans',sans-serif;font-size:11px;line-height:13px;color:#000;letter-spacing:0.120px;">GBPUSD</span>
<span class="t" style="left:97.28px;top:24px;font-family:'DejaVu Sans Condensed','Liberation Sans',sans-serif;font-size:11px;line-height:13px;color:#ff0000;letter-spacing:-0.280px;">1.5201</span>
<span class="t" style="left:151.28px;top:24px;font-family:'DejaVu Sans Condensed','Liberation Sans',sans-serif;font-size:11px;line-height:13px;color:#ff0000;letter-spacing:-0.280px;">1.5204</span>
<div style="left:0px;top:40px;width:189px;height:1px;background:#c4c4c4;"></div>
<svg class="i" style="left:4px;top:45px;" width="11" height="12" viewBox="0 0 11 12"><path d="M3.500 0.500 h4 v3.700 h2.800 l-4.800 4.800 l-4.800 -4.800 h2.800 z" fill="#f4511e" stroke="#a83208" stroke-width="0.9" stroke-linejoin="round"/><path d="M4.500 1.400 h1.300 v3.600" stroke="#ff9a6e" stroke-width="0.9" fill="none"/></svg>
<span class="t" style="left:20.00px;top:44px;font-family:'DejaVu Sans Condensed','Liberation Sans',sans-serif;font-size:11px;line-height:13px;color:#000;letter-spacing:0.120px;">USDJPY</span>
<span class="t" style="left:103.58px;top:44px;font-family:'DejaVu Sans Condensed','Liberation Sans',sans-serif;font-size:11px;line-height:13px;color:#ff0000;letter-spacing:-0.350px;">94.21</span>
<span class="t" style="left:157.58px;top:44px;font-family:'DejaVu Sans Condensed','Liberation Sans',sans-serif;font-size:11px;line-height:13px;color:#ff0000;letter-spacing:-0.350px;">94.24</span>
<div style="left:0px;top:60px;width:189px;height:1px;background:#c4c4c4;"></div>
<svg class="i" style="left:4px;top:65px;" width="11" height="12" viewBox="0 0 11 12"><path d="M3.500 0.500 h4 v3.700 h2.800 l-4.800 4.800 l-4.800 -4.800 h2.800 z" fill="#f4511e" stroke="#a83208" stroke-width="0.9" stroke-linejoin="round"/><path d="M4.500 1.400 h1.300 v3.600" stroke="#ff9a6e" stroke-width="0.9" fill="none"/></svg>
<span class="t" style="left:20.00px;top:64px;font-family:'DejaVu Sans Condensed','Liberation Sans',sans-serif;font-size:11px;line-height:13px;color:#000;letter-spacing:0.120px;">USDCHF</span>
<span class="t" style="left:97.28px;top:64px;font-family:'DejaVu Sans Condensed','Liberation Sans',sans-serif;font-size:11px;line-height:13px;color:#ff0000;letter-spacing:-0.280px;">0.9493</span>
<span class="t" style="left:151.28px;top:64px;font-family:'DejaVu Sans Condensed','Liberation Sans',sans-serif;font-size:11px;line-height:13px;color:#ff0000;letter-spacing:-0.280px;">0.9496</span>
<div style="left:0px;top:80px;width:189px;height:1px;background:#c4c4c4;"></div>
<svg class="i" style="left:4px;top:85px;" width="11" height="12" viewBox="0 0 11 12"><path d="M3.500 0.500 h4 v3.700 h2.800 l-4.800 4.800 l-4.800 -4.800 h2.800 z" fill="#f4511e" stroke="#a83208" stroke-width="0.9" stroke-linejoin="round"/><path d="M4.500 1.400 h1.300 v3.600" stroke="#ff9a6e" stroke-width="0.9" fill="none"/></svg>
<span class="t" style="left:20.00px;top:84px;font-family:'DejaVu Sans Condensed','Liberation Sans',sans-serif;font-size:11px;line-height:13px;color:#000;letter-spacing:0.120px;">USDCAD</span>
<span class="t" style="left:97.28px;top:84px;font-family:'DejaVu Sans Condensed','Liberation Sans',sans-serif;font-size:11px;line-height:13px;color:#ff0000;letter-spacing:-0.280px;">1.0174</span>
<span class="t" style="left:151.28px;top:84px;font-family:'DejaVu Sans Condensed','Liberation Sans',sans-serif;font-size:11px;line-height:13px;color:#ff0000;letter-spacing:-0.280px;">1.0177</span>
<div style="left:0px;top:100px;width:189px;height:1px;background:#c4c4c4;"></div>
<svg class="i" style="left:4px;top:105px;" width="11" height="12" viewBox="0 0 11 12"><path d="M3.500 0.500 h4 v3.700 h2.800 l-4.800 4.800 l-4.800 -4.800 h2.800 z" fill="#f4511e" stroke="#a83208" stroke-width="0.9" stroke-linejoin="round"/><path d="M4.500 1.400 h1.300 v3.600" stroke="#ff9a6e" stroke-width="0.9" fill="none"/></svg>
<span class="t" style="left:20.00px;top:104px;font-family:'DejaVu Sans Condensed','Liberation Sans',sans-serif;font-size:11px;line-height:13px;color:#000;letter-spacing:0.120px;">AUDUSD</span>
<span class="t" style="left:97.28px;top:104px;font-family:'DejaVu Sans Condensed','Liberation Sans',sans-serif;font-size:11px;line-height:13px;color:#ff0000;letter-spacing:-0.280px;">1.0417</span>
<span class="t" style="left:151.28px;top:104px;font-family:'DejaVu Sans Condensed','Liberation Sans',sans-serif;font-size:11px;line-height:13px;color:#ff0000;letter-spacing:-0.280px;">1.0420</span>
<div style="left:0px;top:120px;width:189px;height:1px;background:#c4c4c4;"></div>
<svg class="i" style="left:4px;top:125px;" width="11" height="12" viewBox="0 0 11 12"><path d="M3.500 0.500 h4 v3.700 h2.800 l-4.800 4.800 l-4.800 -4.800 h2.800 z" fill="#f4511e" stroke="#a83208" stroke-width="0.9" stroke-linejoin="round"/><path d="M4.500 1.400 h1.300 v3.600" stroke="#ff9a6e" stroke-width="0.9" fill="none"/></svg>
<span class="t" style="left:20.00px;top:124px;font-family:'DejaVu Sans Condensed','Liberation Sans',sans-serif;font-size:11px;line-height:13px;color:#000;letter-spacing:0.120px;">NZDUSD</span>
<span class="t" style="left:97.28px;top:124px;font-family:'DejaVu Sans Condensed','Liberation Sans',sans-serif;font-size:11px;line-height:13px;color:#ff0000;letter-spacing:-0.280px;">0.8370</span>
<span class="t" style="left:151.28px;top:124px;font-family:'DejaVu Sans Condensed','Liberation Sans',sans-serif;font-size:11px;line-height:13px;color:#ff0000;letter-spacing:-0.280px;">0.8373</span>
<div style="left:0px;top:140px;width:189px;height:1px;background:#c4c4c4;"></div>
<svg class="i" style="left:4px;top:145px;" width="11" height="12" viewBox="0 0 11 12"><path d="M3.500 0.500 h4 v3.700 h2.800 l-4.800 4.800 l-4.800 -4.800 h2.800 z" fill="#f4511e" stroke="#a83208" stroke-width="0.9" stroke-linejoin="round"/><path d="M4.500 1.400 h1.300 v3.600" stroke="#ff9a6e" stroke-width="0.9" fill="none"/></svg>
<span class="t" style="left:20.00px;top:144px;font-family:'DejaVu Sans Condensed','Liberation Sans',sans-serif;font-size:11px;line-height:13px;color:#000;letter-spacing:0.120px;">EURJPY</span>
<span class="t" style="left:97.28px;top:144px;font-family:'DejaVu Sans Condensed','Liberation Sans',sans-serif;font-size:11px;line-height:13px;color:#ff0000;letter-spacing:-0.280px;">120.75</span>
<span class="t" style="left:151.28px;top:144px;font-family:'DejaVu Sans Condensed','Liberation Sans',sans-serif;font-size:11px;line-height:13px;color:#ff0000;letter-spacing:-0.280px;">120.79</span>
<div style="left:0px;top:160px;width:189px;height:1px;background:#c4c4c4;"></div>
<div style="left:79px;top:0px;width:1px;height:148px;background:#c4c4c4;"></div>
<div style="left:133px;top:0px;width:1px;height:148px;background:#c4c4c4;"></div>
</div>
<div style="left:201px;top:122px;width:17px;height:172px;background:linear-gradient(90deg,#e6e6e6,#f4f4f4 35%,#f0f0f0);"></div>
<svg class="i" style="left:206px;top:129px;" width="9" height="5" viewBox="0 0 9 5"><path d="M0.300 5 L4.500 0.500 L8.700 5 Z" fill="#4d4d4d"/></svg>
<svg class="i" style="left:206px;top:283px;" width="9" height="5" viewBox="0 0 9 5"><path d="M0.300 0 L4.500 4.500 L8.700 0 Z" fill="#4d4d4d"/></svg>
<div style="left:202px;top:140px;width:15px;height:15px;background:linear-gradient(90deg,#f7f7f7,#ededed 45%,#dcdcdc 50%,#e4e4e4);border:1px solid #9a9a9a;border-radius:2px;box-sizing:border-box;"></div>
<div style="left:12px;top:294px;width:206px;height:1px;background:#000;"></div>
<div style="left:14px;top:294px;width:59px;height:18px;background:#fff;border:1px solid #000;border-top:none;box-sizing:border-box;"></div>
<div style="left:73px;top:295px;width:1px;height:17px;background:#4a4a4a;"></div>
<span class="t" style="left:23.00px;top:297px;font-family:'DejaVu Sans Condensed','Liberation Sans',sans-serif;font-size:11px;line-height:13px;color:#000;letter-spacing:-0.504px;">Symbols</span>
<span class="t" style="left:82.00px;top:297px;font-family:'DejaVu Sans Condensed','Liberation Sans',sans-serif;font-size:11px;line-height:13px;color:#6c7386;letter-spacing:-0.218px;">Tick Chart</span>
<div style="left:141px;top:297px;width:1px;height:12px;background:#555;"></div>
<div style="left:8px;top:317px;width:214px;height:1px;background:#a0a0a0;"></div>
<div style="left:8px;top:318px;width:214px;height:1px;background:#fff;"></div>
<div style="left:11px;top:320px;width:194px;height:13px;background:linear-gradient(90deg,#bccbe0,#cfdcee 60%,#d6e2f1);"></div>
<span class="t" style="left:13.00px;top:320px;font-family:'DejaVu Sans Condensed','Liberation Sans',sans-serif;font-size:11px;line-height:13px;color:#4d5b72;letter-spacing:-0.302px;">Navigator</span>
<svg class="i" style="left:210px;top:324px;shape-rendering:crispEdges;" width="7" height="6" viewBox="0 0 7 6"><rect x="0" y="0" width="2" height="1"/><rect x="5" y="0" width="2" height="1"/><rect x="1" y="1" width="2" height="1"/><rect x="4" y="1" width="2" height="1"/><rect x="2" y="2" width="3" height="1"/><rect x="2" y="3" width="3" height="1"/><rect x="1" y="4" width="2" height="1"/><rect x="4" y="4" width="2" height="1"/><rect x="0" y="5" width="2" height="1"/><rect x="5" y="5" width="2" height="1"/></svg>
<div style="left:11px;top:334px;width:209px;height:176px;background:#f0f0f0;border:1px solid #a0a0a0;border-right-color:#fff;border-bottom-color:#fff;box-sizing:border-box;"></div>
<div style="left:12px;top:335px;width:207px;height:154px;background:#fff;"></div>
<svg class="i" style="left:17px;top:336px;" width="17" height="16" viewBox="0 0 17 16"><rect x="1.500" y="1.500" width="10" height="8" rx="1" fill="#f3f8fe" stroke="#6aa5e0"/><rect x="4.500" y="5.500" width="10" height="8" rx="1" fill="#fafdff" stroke="#4a90d8"/><path d="M6 10.500 l1.500 -2 l1.500 3 l1.500 -3 l1.500 2" fill="none" stroke="#3a7fd0" stroke-width="1"/><path d="M3 4.500 h2 M6 4.500 h2" stroke="#3a7fd0" stroke-width="1"/></svg>
<span class="t" style="left:39.00px;top:338px;font-family:'Liberation Sans',sans-serif;font-size:12px;line-height:14px;color:#000;letter-spacing:-0.409px;">IFX Trader</span>
<div style="left:25px;top:353px;width:1px;height:82px;background-image:linear-gradient(#999 50%,transparent 50%);background-size:1px 2px"></div>
<div style="left:31px;top:364px;width:5px;height:1px;background-image:linear-gradient(90deg,#999 50%,transparent 50%);background-size:2px 1px"></div>
<div style="left:21px;top:360px;width:9px;height:9px;background:linear-gradient(135deg,#fff,#e0e0e0);border:1px solid #919191;border-radius:2px;box-sizing:border-box;"></div>
<svg class="i" style="left:21px;top:360px;" width="9" height="9" viewBox="0 0 9 9"><path d="M2 4.500 h5 M4.500 2 v5" stroke="#3a4a8a" stroke-width="1"/></svg>
<svg class="i" style="left:38px;top:354px;" width="17" height="17" viewBox="0 0 17 17"><circle cx="6.500" cy="4" r="3" fill="#f2c84a" stroke="#a87c10" stroke-width="0.8"/><circle cx="11" cy="4" r="3" fill="#f2c84a" stroke="#a87c10" stroke-width="0.8"/><path d="M2 15 v-5 q0 -3 4.500 -3 q4 0 4 3 v5 z" fill="#f0c040" stroke="#a87c10" stroke-width="0.8"/><path d="M7 15.500 v-5 q0 -3 4 -3 q4.500 0 4.500 3 v5 z" fill="#f5cf55" stroke="#a87c10" stroke-width="0.8"/><path d="M10 8.500 l2 4 l2 -4 z" fill="#fff8dc"/><circle cx="3" cy="12" r="2.800" fill="#22c022" stroke="#0a8a0a" stroke-width="0.7"/></svg>
<span class="t" style="left:60.00px;top:356px;font-family:'Liberation Sans',sans-serif;font-size:12px;line-height:14px;color:#000;letter-spacing:0.091px;">Accounts</span>
<div style="left:31px;top:382px;width:5px;height:1px;background-image:linear-gradient(90deg,#999 50%,transparent 50%);background-size:2px 1px"></div>
<div style="left:21px;top:378px;width:9px;height:9px;background:linear-gradient(135deg,#fff,#e0e0e0);border:1px solid #919191;border-radius:2px;box-sizing:border-box;"></div>
<svg class="i" style="left:21px;top:378px;" width="9" height="9" viewBox="0 0 9 9"><path d="M2 4.500 h5 M4.500 2 v5" stroke="#3a4a8a" stroke-width="1"/></svg>
<svg class="i" style="left:38px;top:372px;" width="17" height="17" viewBox="0 0 17 17"><rect x="1.500" y="0.500" width="13" height="14" rx="2.500" fill="#f7d95c" stroke="#b08a1a"/><rect x="2.500" y="1.500" width="11" height="6" rx="2" fill="#fbe88e"/><text x="8" y="11.500" font-family="Liberation Serif,serif" font-style="italic" font-weight="bold" font-size="11" fill="#8a6a10" text-anchor="middle">f</text></svg>
<span class="t" style="left:60.00px;top:374px;font-family:'Liberation Sans',sans-serif;font-size:12px;line-height:14px;color:#000;">Indicators</span>
<div style="left:31px;top:400px;width:5px;height:1px;background-image:linear-gradient(90deg,#999 50%,transparent 50%);background-size:2px 1px"></div>
<div style="left:21px;top:396px;width:9px;height:9px;background:linear-gradient(135deg,#fff,#e0e0e0);border:1px solid #919191;border-radius:2px;box-sizing:border-box;"></div>
<svg class="i" style="left:21px;top:396px;" width="9" height="9" viewBox="0 0 9 9"><path d="M2 4.500 h5 M4.500 2 v5" stroke="#3a4a8a" stroke-width="1"/></svg>
<svg class="i" style="left:38px;top:390px;" width="17" height="17" viewBox="0 0 17 17"><ellipse cx="8" cy="5.500" rx="7.500" ry="2.800" fill="#4f9ad8" stroke="#2f72b0" stroke-width="0.8"/><path d="M4 5 q4 -7.500 8 0 z" fill="#6ab2ea" stroke="#2f72b0" stroke-width="0.8"/><path d="M4.500 8 q3.500 5 7 0 z" fill="#f5d060" stroke="#b8901a" stroke-width="0.8"/><path d="M12.500 9 l3.500 3.500 l-3.500 3.500 l-3.500 -3.500 z" fill="#f5c842" stroke="#a87c10" stroke-width="0.8"/></svg>
<span class="t" style="left:60.00px;top:392px;font-family:'Liberation Sans',sans-serif;font-size:12px;line-height:14px;color:#000;letter-spacing:-0.241px;">Expert Advisors</span>
<div style="left:31px;top:418px;width:5px;height:1px;background-image:linear-gradient(90deg,#999 50%,transparent 50%);background-size:2px 1px"></div>
<div style="left:21px;top:414px;width:9px;height:9px;background:linear-gradient(135deg,#fff,#e0e0e0);border:1px solid #919191;border-radius:2px;box-sizing:border-box;"></div>
<svg class="i" style="left:21px;top:414px;" width="9" height="9" viewBox="0 0 9 9"><path d="M2 4.500 h5 M4.500 2 v5" stroke="#3a4a8a" stroke-width="1"/></svg>
<svg class="i" style="left:38px;top:408px;" width="17" height="17" viewBox="0 0 17 17"><rect x="1.500" y="0.500" width="13" height="14" rx="2.500" fill="#f7d95c" stroke="#b08a1a"/><rect x="2.500" y="1.500" width="11" height="6" rx="2" fill="#fbe88e"/><text x="8" y="11.500" font-family="Liberation Serif,serif" font-style="italic" font-weight="bold" font-size="11" fill="#8a6a10" text-anchor="middle">f</text><path d="M12.500 9 l3.500 3.500 l-3.500 3.500 l-3.500 -3.500 z" fill="#f5c842" stroke="#a87c10" stroke-width="0.8"/></svg>
<span class="t" style="left:60.00px;top:410px;font-family:'Liberation Sans',sans-serif;font-size:12px;line-height:14px;color:#000;letter-spacing:-0.013px;">Custom Indicators</span>
<div style="left:31px;top:436px;width:5px;height:1px;background-image:linear-gradient(90deg,#999 50%,transparent 50%);background-size:2px 1px"></div>
<div style="left:21px;top:432px;width:9px;height:9px;background:linear-gradient(135deg,#fff,#e0e0e0);border:1px solid #919191;border-radius:2px;box-sizing:border-box;"></div>
<svg class="i" style="left:21px;top:432px;" width="9" height="9" viewBox="0 0 9 9"><path d="M2 4.500 h5 M4.500 2 v5" stroke="#3a4a8a" stroke-width="1"/></svg>
<svg class="i" style="left:38px;top:426px;" width="17" height="17" viewBox="0 0 17 17"><path d="M3 1.500 h10 v2 h-1.500 v9 h1.500 v2 h-10 v-2 h1.500 v-9 h-1.500 z" fill="#f7dc6a" stroke="#b08a1a" stroke-width="0.9"/><path d="M6 5.500 h4 M6 7.500 h4" stroke="#a08020" stroke-width="0.8" stroke-dasharray="1 1"/><path d="M12.500 9 l3.500 3.500 l-3.500 3.500 l-3.500 -3.500 z" fill="#f5c842" stroke="#a87c10" stroke-width="0.8"/></svg>
<span class="t" style="left:60.00px;top:428px;font-family:'Liberation Sans',sans-serif;font-size:12px;line-height:14px;color:#000;letter-spacing:-0.279px;">Scripts</span>
<div style="left:12px;top:489px;width:206px;height:1px;background:#000;"></div>
<div style="left:14px;top:489px;width:61px;height:18px;background:#fff;border:1px solid #000;border-top:none;box-sizing:border-box;"></div>
<div style="left:75px;top:490px;width:1px;height:17px;background:#4a4a4a;"></div>
<span class="t" style="left:23.00px;top:492px;font-family:'DejaVu Sans Condensed','Liberation Sans',sans-serif;font-size:11px;line-height:13px;color:#000;letter-spacing:-0.715px;">Common</span>
<span class="t" style="left:84.00px;top:492px;font-family:'DejaVu Sans Condensed','Liberation Sans',sans-serif;font-size:11px;line-height:13px;color:#6c7386;letter-spacing:0.050px;">Favorites</span>
<div style="left:140px;top:492px;width:1px;height:12px;background:#555;"></div>
<div style="left:8px;top:512px;width:214px;height:1px;background:#a0a0a0;"></div>
<div style="left:8px;top:513px;width:976px;height:1px;background:#fff;"></div>
<div style="left:222px;top:104px;width:1px;height:409px;background:#a0a0a0;"></div>
<div style="left:223px;top:105px;width:1px;height:408px;background:#696969;"></div>
<svg class="i" style="left:0;top:0" width="992" height="666" viewBox="0 0 992 666"><rect x="224" y="104" width="760" height="1" fill="#a0a0a0"/><rect x="224" y="105" width="760" height="1" fill="#696969"/><rect x="224" y="106" width="758" height="385" fill="#000"/><g shape-rendering="crispEdges"><path d="M259.5 109 V351 M259.5 354 V473" stroke="#778899" stroke-width="1" stroke-dasharray="3 3" fill="none"/><path d="M291.5 109 V351 M291.5 354 V473" stroke="#778899" stroke-width="1" stroke-dasharray="3 3" fill="none"/><path d="M323.5 109 V351 M323.5 354 V473" stroke="#778899" stroke-width="1" stroke-dasharray="3 3" fill="none"/><path d="M355.5 109 V351 M355.5 354 V473" stroke="#778899" stroke-width="1" stroke-dasharray="3 3" fill="none"/><path d="M387.5 109 V351 M387.5 354 V473" stroke="#778899" stroke-width="1" stroke-dasharray="3 3" fill="none"/><path d="M419.5 109 V351 M419.5 354 V473" stroke="#778899" stroke-width="1" stroke-dasharray="3 3" fill="none"/><path d="M451.5 109 V351 M451.5 354 V473" stroke="#778899" stroke-width="1" stroke-dasharray="3 3" fill="none"/><path d="M483.5 109 V351 M483.5 354 V473" stroke="#778899" stroke-width="1" stroke-dasharray="3 3" fill="none"/><path d="M515.5 109 V351 M515.5 354 V473" stroke="#778899" stroke-width="1" stroke-dasharray="3 3" fill="none"/><path d="M547.5 109 V351 M547.5 354 V473" stroke="#778899" stroke-width="1" stroke-dasharray="3 3" fill="none"/><path d="M579.5 109 V351 M579.5 354 V473" stroke="#778899" stroke-width="1" stroke-dasharray="3 3" fill="none"/><path d="M611.5 109 V351 M611.5 354 V473" stroke="#778899" stroke-width="1" stroke-dasharray="3 3" fill="none"/><path d="M643.5 109 V351 M643.5 354 V473" stroke="#778899" stroke-width="1" stroke-dasharray="3 3" fill="none"/><path d="M675.5 109 V351 M675.5 354 V473" stroke="#778899" stroke-width="1" stroke-dasharray="3 3" fill="none"/><path d="M707.5 109 V351 M707.5 354 V473" stroke="#778899" stroke-width="1" stroke-dasharray="3 3" fill="none"/><path d="M739.5 109 V351 M739.5 354 V473" stroke="#778899" stroke-width="1" stroke-dasharray="3 3" fill="none"/><path d="M771.5 109 V351 M771.5 354 V473" stroke="#778899" stroke-width="1" stroke-dasharray="3 3" fill="none"/><path d="M803.5 109 V351 M803.5 354 V473" stroke="#778899" stroke-width="1" stroke-dasharray="3 3" fill="none"/><path d="M835.5 109 V351 M835.5 354 V473" stroke="#778899" stroke-width="1" stroke-dasharray="3 3" fill="none"/><path d="M867.5 109 V351 M867.5 354 V473" stroke="#778899" stroke-width="1" stroke-dasharray="3 3" fill="none"/><path d="M899.5 109 V351 M899.5 354 V473" stroke="#778899" stroke-width="1" stroke-dasharray="3 3" fill="none"/><path d="M931.5 109 V351 M931.5 354 V473" stroke="#778899" stroke-width="1" stroke-dasharray="3 3" fill="none"/><path d="M228 130.5 H942" stroke="#778899" stroke-width="1" stroke-dasharray="3 3" fill="none"/><path d="M228 170.5 H942" stroke="#778899" stroke-width="1" stroke-dasharray="3 3" fill="none"/><path d="M228 210.5 H942" stroke="#778899" stroke-width="1" stroke-dasharray="3 3" fill="none"/><path d="M228 250.5 H942" stroke="#778899" stroke-width="1" stroke-dasharray="3 3" fill="none"/><path d="M228 290.5 H942" stroke="#778899" stroke-width="1" stroke-dasharray="3 3" fill="none"/><path d="M228 330.5 H942" stroke="#778899" stroke-width="1" stroke-dasharray="3 3" fill="none"/><path d="M228 400.500 H942" stroke="#778899" stroke-width="1" stroke-dasharray="3 3" fill="none"/></g><clipPath id="cm"><rect x="227" y="109" width="715" height="242"/></clipPath><g clip-path="url(#cm)"><g shape-rendering="crispEdges"><path d="M227 226.500 H942" stroke="#8a96a6" stroke-width="1"/><rect x="227" y="254" width="1" height="21" fill="#00ff00"/><rect x="225" y="262" width="5" height="13" fill="#00ff00"/><rect x="226" y="263" width="3" height="11" fill="#fff"/><rect x="235" y="266" width="1" height="25" fill="#00ff00"/><rect x="233" y="270" width="5" height="1" fill="#00ff00"/><rect x="243" y="258" width="1" height="29" fill="#00ff00"/><rect x="241" y="262" width="5" height="5" fill="#00ff00"/><rect x="242" y="263" width="3" height="3" fill="#000"/><rect x="251" y="234" width="1" height="37" fill="#00ff00"/><rect x="249" y="234" width="5" height="25" fill="#00ff00"/><rect x="250" y="235" width="3" height="23" fill="#000"/><rect x="259" y="238" width="1" height="37" fill="#00ff00"/><rect x="257" y="238" width="5" height="33" fill="#00ff00"/><rect x="258" y="239" width="3" height="31" fill="#fff"/><rect x="267" y="262" width="1" height="17" fill="#00ff00"/><rect x="265" y="266" width="5" height="5" fill="#00ff00"/><rect x="266" y="267" width="3" height="3" fill="#fff"/><rect x="275" y="170" width="1" height="109" fill="#00ff00"/><rect x="273" y="190" width="5" height="77" fill="#00ff00"/><rect x="274" y="191" width="3" height="75" fill="#000"/><rect x="283" y="158" width="1" height="33" fill="#00ff00"/><rect x="281" y="182" width="5" height="5" fill="#00ff00"/><rect x="282" y="183" width="3" height="3" fill="#000"/><rect x="291" y="166" width="1" height="33" fill="#00ff00"/><rect x="289" y="178" width="5" height="21" fill="#00ff00"/><rect x="290" y="179" width="3" height="19" fill="#fff"/><rect x="299" y="182" width="1" height="25" fill="#00ff00"/><rect x="297" y="198" width="5" height="5" fill="#00ff00"/><rect x="298" y="199" width="3" height="3" fill="#000"/><rect x="307" y="186" width="1" height="37" fill="#00ff00"/><rect x="305" y="202" width="5" height="5" fill="#00ff00"/><rect x="306" y="203" width="3" height="3" fill="#fff"/><rect x="315" y="178" width="1" height="37" fill="#00ff00"/><rect x="313" y="182" width="5" height="29" fill="#00ff00"/><rect x="314" y="183" width="3" height="27" fill="#000"/><rect x="323" y="166" width="1" height="45" fill="#00ff00"/><rect x="321" y="178" width="5" height="21" fill="#00ff00"/><rect x="322" y="179" width="3" height="19" fill="#fff"/><rect x="331" y="194" width="1" height="41" fill="#00ff00"/><rect x="329" y="194" width="5" height="13" fill="#00ff00"/><rect x="330" y="195" width="3" height="11" fill="#fff"/><rect x="339" y="190" width="1" height="21" fill="#00ff00"/><rect x="337" y="202" width="5" height="9" fill="#00ff00"/><rect x="338" y="203" width="3" height="7" fill="#000"/><rect x="347" y="198" width="1" height="13" fill="#00ff00"/><rect x="345" y="202" width="5" height="5" fill="#00ff00"/><rect x="346" y="203" width="3" height="3" fill="#000"/><rect x="355" y="198" width="1" height="17" fill="#00ff00"/><rect x="353" y="206" width="5" height="9" fill="#00ff00"/><rect x="354" y="207" width="3" height="7" fill="#fff"/><rect x="363" y="210" width="1" height="5" fill="#00ff00"/><rect x="361" y="210" width="5" height="5" fill="#00ff00"/><rect x="362" y="211" width="3" height="3" fill="#fff"/><rect x="371" y="202" width="1" height="13" fill="#00ff00"/><rect x="369" y="202" width="5" height="9" fill="#00ff00"/><rect x="370" y="203" width="3" height="7" fill="#000"/><rect x="379" y="202" width="1" height="9" fill="#00ff00"/><rect x="377" y="202" width="5" height="5" fill="#00ff00"/><rect x="378" y="203" width="3" height="3" fill="#000"/><rect x="387" y="198" width="1" height="13" fill="#00ff00"/><rect x="385" y="198" width="5" height="9" fill="#00ff00"/><rect x="386" y="199" width="3" height="7" fill="#fff"/><rect x="395" y="202" width="1" height="13" fill="#00ff00"/><rect x="393" y="202" width="5" height="9" fill="#00ff00"/><rect x="394" y="203" width="3" height="7" fill="#fff"/><rect x="403" y="202" width="1" height="13" fill="#00ff00"/><rect x="401" y="212" width="5" height="1" fill="#00ff00"/><rect x="411" y="198" width="1" height="13" fill="#00ff00"/><rect x="409" y="202" width="5" height="9" fill="#00ff00"/><rect x="410" y="203" width="3" height="7" fill="#000"/><rect x="419" y="202" width="1" height="9" fill="#00ff00"/><rect x="417" y="206" width="5" height="5" fill="#00ff00"/><rect x="418" y="207" width="3" height="3" fill="#fff"/><rect x="427" y="206" width="1" height="5" fill="#00ff00"/><rect x="425" y="210" width="5" height="1" fill="#00ff00"/><rect x="435" y="210" width="1" height="5" fill="#00ff00"/><rect x="433" y="210" width="5" height="5" fill="#00ff00"/><rect x="434" y="211" width="3" height="3" fill="#fff"/><rect x="443" y="210" width="1" height="69" fill="#00ff00"/><rect x="441" y="210" width="5" height="61" fill="#00ff00"/><rect x="442" y="211" width="3" height="59" fill="#fff"/><rect x="451" y="254" width="1" height="65" fill="#00ff00"/><rect x="449" y="258" width="5" height="21" fill="#00ff00"/><rect x="450" y="259" width="3" height="19" fill="#000"/><rect x="459" y="254" width="1" height="65" fill="#00ff00"/><rect x="457" y="254" width="5" height="53" fill="#00ff00"/><rect x="458" y="255" width="3" height="51" fill="#fff"/><rect x="467" y="274" width="1" height="49" fill="#00ff00"/><rect x="465" y="298" width="5" height="5" fill="#00ff00"/><rect x="466" y="299" width="3" height="3" fill="#000"/><rect x="475" y="266" width="1" height="45" fill="#00ff00"/><rect x="473" y="282" width="5" height="13" fill="#00ff00"/><rect x="474" y="283" width="3" height="11" fill="#000"/><rect x="483" y="246" width="1" height="69" fill="#00ff00"/><rect x="481" y="274" width="5" height="13" fill="#00ff00"/><rect x="482" y="275" width="3" height="11" fill="#000"/><rect x="491" y="270" width="1" height="41" fill="#00ff00"/><rect x="489" y="278" width="5" height="9" fill="#00ff00"/><rect x="490" y="279" width="3" height="7" fill="#fff"/><rect x="499" y="246" width="1" height="61" fill="#00ff00"/><rect x="497" y="250" width="5" height="41" fill="#00ff00"/><rect x="498" y="251" width="3" height="39" fill="#000"/><rect x="507" y="254" width="1" height="53" fill="#00ff00"/><rect x="505" y="254" width="5" height="21" fill="#00ff00"/><rect x="506" y="255" width="3" height="19" fill="#fff"/><rect x="515" y="250" width="1" height="33" fill="#00ff00"/><rect x="513" y="250" width="5" height="21" fill="#00ff00"/><rect x="514" y="251" width="3" height="19" fill="#000"/><rect x="523" y="254" width="1" height="17" fill="#00ff00"/><rect x="521" y="254" width="5" height="9" fill="#00ff00"/><rect x="522" y="255" width="3" height="7" fill="#fff"/><rect x="531" y="258" width="1" height="25" fill="#00ff00"/><rect x="529" y="258" width="5" height="5" fill="#00ff00"/><rect x="530" y="259" width="3" height="3" fill="#fff"/><rect x="539" y="258" width="1" height="17" fill="#00ff00"/><rect x="537" y="258" width="5" height="13" fill="#00ff00"/><rect x="538" y="259" width="3" height="11" fill="#fff"/><rect x="547" y="250" width="1" height="45" fill="#00ff00"/><rect x="545" y="258" width="5" height="21" fill="#00ff00"/><rect x="546" y="259" width="3" height="19" fill="#000"/><rect x="555" y="250" width="1" height="9" fill="#00ff00"/><rect x="553" y="254" width="5" height="1" fill="#00ff00"/><rect x="563" y="246" width="1" height="13" fill="#00ff00"/><rect x="561" y="250" width="5" height="1" fill="#00ff00"/><rect x="571" y="242" width="1" height="17" fill="#00ff00"/><rect x="569" y="242" width="5" height="13" fill="#00ff00"/><rect x="570" y="243" width="3" height="11" fill="#000"/><rect x="579" y="246" width="1" height="21" fill="#00ff00"/><rect x="577" y="246" width="5" height="17" fill="#00ff00"/><rect x="578" y="247" width="3" height="15" fill="#fff"/><rect x="587" y="258" width="1" height="9" fill="#00ff00"/><rect x="585" y="258" width="5" height="9" fill="#00ff00"/><rect x="586" y="259" width="3" height="7" fill="#000"/><rect x="595" y="250" width="1" height="5" fill="#00ff00"/><rect x="593" y="250" width="5" height="5" fill="#00ff00"/><rect x="594" y="251" width="3" height="3" fill="#000"/><rect x="603" y="242" width="1" height="29" fill="#00ff00"/><rect x="601" y="242" width="5" height="5" fill="#00ff00"/><rect x="602" y="243" width="3" height="3" fill="#000"/><rect x="611" y="210" width="1" height="37" fill="#00ff00"/><rect x="609" y="210" width="5" height="37" fill="#00ff00"/><rect x="610" y="211" width="3" height="35" fill="#000"/><rect x="619" y="210" width="1" height="21" fill="#00ff00"/><rect x="617" y="214" width="5" height="13" fill="#00ff00"/><rect x="618" y="215" width="3" height="11" fill="#fff"/><rect x="627" y="222" width="1" height="9" fill="#00ff00"/><rect x="625" y="222" width="5" height="5" fill="#00ff00"/><rect x="626" y="223" width="3" height="3" fill="#fff"/><rect x="635" y="222" width="1" height="41" fill="#00ff00"/><rect x="633" y="222" width="5" height="29" fill="#00ff00"/><rect x="634" y="223" width="3" height="27" fill="#fff"/><rect x="643" y="242" width="1" height="21" fill="#00ff00"/><rect x="641" y="242" width="5" height="5" fill="#00ff00"/><rect x="642" y="243" width="3" height="3" fill="#000"/><rect x="651" y="218" width="1" height="29" fill="#00ff00"/><rect x="649" y="238" width="5" height="5" fill="#00ff00"/><rect x="650" y="239" width="3" height="3" fill="#fff"/><rect x="659" y="246" width="1" height="13" fill="#00ff00"/><rect x="657" y="246" width="5" height="9" fill="#00ff00"/><rect x="658" y="247" width="3" height="7" fill="#fff"/><rect x="667" y="250" width="1" height="17" fill="#00ff00"/><rect x="665" y="258" width="5" height="5" fill="#00ff00"/><rect x="666" y="259" width="3" height="3" fill="#fff"/><rect x="675" y="210" width="1" height="57" fill="#00ff00"/><rect x="673" y="214" width="5" height="53" fill="#00ff00"/><rect x="674" y="215" width="3" height="51" fill="#000"/><rect x="683" y="210" width="1" height="37" fill="#00ff00"/><rect x="681" y="210" width="5" height="37" fill="#00ff00"/><rect x="682" y="211" width="3" height="35" fill="#fff"/><rect x="691" y="242" width="1" height="17" fill="#00ff00"/><rect x="689" y="250" width="5" height="1" fill="#00ff00"/><rect x="699" y="250" width="1" height="21" fill="#00ff00"/><rect x="697" y="254" width="5" height="5" fill="#00ff00"/><rect x="698" y="255" width="3" height="3" fill="#fff"/><rect x="707" y="226" width="1" height="37" fill="#00ff00"/><rect x="705" y="238" width="5" height="25" fill="#00ff00"/><rect x="706" y="239" width="3" height="23" fill="#000"/><rect x="715" y="234" width="1" height="17" fill="#00ff00"/><rect x="713" y="234" width="5" height="13" fill="#00ff00"/><rect x="714" y="235" width="3" height="11" fill="#fff"/><rect x="723" y="218" width="1" height="25" fill="#00ff00"/><rect x="721" y="234" width="5" height="9" fill="#00ff00"/><rect x="722" y="235" width="3" height="7" fill="#000"/><rect x="731" y="234" width="1" height="29" fill="#00ff00"/><rect x="729" y="238" width="5" height="13" fill="#00ff00"/><rect x="730" y="239" width="3" height="11" fill="#fff"/><rect x="739" y="238" width="1" height="13" fill="#00ff00"/><rect x="737" y="238" width="5" height="9" fill="#00ff00"/><rect x="738" y="239" width="3" height="7" fill="#000"/><rect x="747" y="238" width="1" height="9" fill="#00ff00"/><rect x="745" y="242" width="5" height="5" fill="#00ff00"/><rect x="746" y="243" width="3" height="3" fill="#fff"/><rect x="755" y="242" width="1" height="13" fill="#00ff00"/><rect x="753" y="250" width="5" height="1" fill="#00ff00"/><rect x="763" y="250" width="1" height="21" fill="#00ff00"/><rect x="761" y="254" width="5" height="17" fill="#00ff00"/><rect x="762" y="255" width="3" height="15" fill="#fff"/><rect x="771" y="270" width="1" height="41" fill="#00ff00"/><rect x="769" y="274" width="5" height="29" fill="#00ff00"/><rect x="770" y="275" width="3" height="27" fill="#fff"/><rect x="779" y="290" width="1" height="17" fill="#00ff00"/><rect x="777" y="290" width="5" height="17" fill="#00ff00"/><rect x="778" y="291" width="3" height="15" fill="#000"/><rect x="787" y="266" width="1" height="29" fill="#00ff00"/><rect x="785" y="282" width="5" height="13" fill="#00ff00"/><rect x="786" y="283" width="3" height="11" fill="#000"/><rect x="795" y="266" width="1" height="33" fill="#00ff00"/><rect x="793" y="270" width="5" height="17" fill="#00ff00"/><rect x="794" y="271" width="3" height="15" fill="#000"/><rect x="803" y="226" width="1" height="41" fill="#00ff00"/><rect x="801" y="238" width="5" height="29" fill="#00ff00"/><rect x="802" y="239" width="3" height="27" fill="#000"/><rect x="811" y="238" width="1" height="9" fill="#00ff00"/><rect x="809" y="242" width="5" height="1" fill="#00ff00"/><rect x="819" y="238" width="1" height="13" fill="#00ff00"/><rect x="817" y="242" width="5" height="5" fill="#00ff00"/><rect x="818" y="243" width="3" height="3" fill="#000"/><rect x="827" y="230" width="1" height="25" fill="#00ff00"/><rect x="825" y="246" width="5" height="9" fill="#00ff00"/><rect x="826" y="247" width="3" height="7" fill="#fff"/><rect x="835" y="250" width="1" height="17" fill="#00ff00"/><rect x="833" y="250" width="5" height="9" fill="#00ff00"/><rect x="834" y="251" width="3" height="7" fill="#000"/><rect x="843" y="246" width="1" height="17" fill="#00ff00"/><rect x="841" y="254" width="5" height="1" fill="#00ff00"/><rect x="851" y="254" width="1" height="13" fill="#00ff00"/><rect x="849" y="258" width="5" height="5" fill="#00ff00"/><rect x="850" y="259" width="3" height="3" fill="#fff"/><rect x="859" y="254" width="1" height="13" fill="#00ff00"/><rect x="857" y="254" width="5" height="13" fill="#00ff00"/><rect x="858" y="255" width="3" height="11" fill="#000"/><rect x="867" y="250" width="1" height="13" fill="#00ff00"/><rect x="865" y="250" width="5" height="5" fill="#00ff00"/><rect x="866" y="251" width="3" height="3" fill="#fff"/><rect x="875" y="258" width="1" height="9" fill="#00ff00"/><rect x="873" y="258" width="5" height="5" fill="#00ff00"/><rect x="874" y="259" width="3" height="3" fill="#fff"/><rect x="883" y="258" width="1" height="5" fill="#00ff00"/><rect x="881" y="258" width="5" height="5" fill="#00ff00"/><rect x="882" y="259" width="3" height="3" fill="#fff"/><rect x="891" y="250" width="1" height="17" fill="#00ff00"/><rect x="889" y="254" width="5" height="5" fill="#00ff00"/><rect x="890" y="255" width="3" height="3" fill="#000"/><rect x="899" y="234" width="1" height="25" fill="#00ff00"/><rect x="897" y="238" width="5" height="21" fill="#00ff00"/><rect x="898" y="239" width="3" height="19" fill="#000"/><rect x="907" y="218" width="1" height="33" fill="#00ff00"/><rect x="905" y="226" width="5" height="17" fill="#00ff00"/><rect x="906" y="227" width="3" height="15" fill="#000"/><rect x="915" y="210" width="1" height="17" fill="#00ff00"/><rect x="913" y="214" width="5" height="9" fill="#00ff00"/><rect x="914" y="215" width="3" height="7" fill="#000"/><rect x="923" y="210" width="1" height="65" fill="#00ff00"/><rect x="921" y="218" width="5" height="9" fill="#00ff00"/><rect x="922" y="219" width="3" height="7" fill="#fff"/></g><path d="M291.5 356V351M299.5 349V351M307.5 346V351M315.5 339V351M323.5 339V351M331.5 322V351M339.5 310V351M347.5 302V351M355.5 294V351M363.5 290V351M371.5 288V351M379.5 283V351M387.5 285V351M395.5 286V351M403.5 287V351M411.5 287V351M419.5 287V351M427.5 287V351M435.5 280V351M443.5 280V351M451.5 284V351M459.5 280V351M467.5 276V351M475.5 267V351M483.5 232V351M491.5 224V351M499.5 224V340M507.5 224V340M515.5 223V340M523.5 221V340M531.5 221V340M539.5 221V314M547.5 221V308M555.5 210V296M563.5 212V289M571.5 212V280M579.5 212V274M587.5 212V274M595.5 212V274M603.5 218V274M611.5 213V274M619.5 215V274M627.5 215V274M635.5 215V274M643.5 215V260M651.5 230V260M659.5 248V260M667.5 249V260" stroke="#f4a460" stroke-width="1" stroke-dasharray="3 3" fill="none" shape-rendering="crispEdges"/><path d="M683.5 246V250M691.5 240V251M699.5 240V254M707.5 240V255M715.5 240V255M723.5 240V262M731.5 240V264M739.5 240V270M747.5 240V268M755.5 240V270M763.5 240V269M771.5 240V268M779.5 240V267M787.5 240V264M795.5 240V264M803.5 240V264M811.5 240V264M819.5 240V255M827.5 240V251M835.5 240V252M843.5 240V252M851.5 240V253M859.5 240V253M867.5 240V253M875.5 240V253M883.5 240V250M891.5 240V250M899.5 240V249M907.5 244V249M915.5 244V249M923.5 244V246M931.5 244V246M939.5 244V246" stroke="#d8bfd8" stroke-width="1" stroke-dasharray="3 3" fill="none" shape-rendering="crispEdges"/><polyline points="291.5,356.5 299.5,349.5 307.5,346.5 315.5,339.5 323.5,339.5 331.5,322.5 339.5,310.5 347.5,302.5 355.5,294.5 363.5,290.5 371.5,288.5 379.5,283.5 387.5,285.5 395.5,286.5 403.5,287.5 411.5,287.5 419.5,287.5 427.5,287.5 435.5,280.5 443.5,280.5 451.5,284.5 459.5,280.5 467.5,276.5 475.5,267.5 483.5,232.5 491.5,224.5 499.5,224.5 507.5,224.5 515.5,223.5 523.5,221.5 531.5,221.5 539.5,221.5 547.5,221.5 555.5,210.5 563.5,212.5 571.5,212.5 579.5,212.5 587.5,212.5 595.5,212.5 603.5,218.5 611.5,213.5 619.5,215.5 627.5,215.5 635.5,215.5 643.5,215.5 651.5,230.5 659.5,248.5 667.5,249.5 675.5,250.5 683.5,250.5 691.5,251.5 699.5,254.5 707.5,255.5 715.5,255.5 723.5,262.5 731.5,264.5 739.5,270.5 747.5,268.5 755.5,270.5 763.5,269.5 771.5,268.5 779.5,267.5 787.5,264.5 795.5,264.5 803.5,264.5 811.5,264.5 819.5,255.5 827.5,251.5 835.5,252.5 843.5,252.5 851.5,253.5 859.5,253.5 867.5,253.5 875.5,253.5 883.5,250.5 891.5,250.5 899.5,249.5 907.5,249.5 915.5,249.5 923.5,246.5 931.5,246.5 939.5,246.5" fill="none" stroke="#f4a460" stroke-width="1" stroke-dasharray="3 3" shape-rendering="crispEdges"/><polyline points="491.5,360.5 499.5,340.5 507.5,340.5 515.5,340.5 523.5,340.5 531.5,340.5 539.5,314.5 547.5,308.5 555.5,296.5 563.5,289.5 571.5,280.5 579.5,274.5 587.5,274.5 595.5,274.5 603.5,274.5 611.5,274.5 619.5,274.5 627.5,274.5 635.5,274.5 643.5,260.5 651.5,260.5 659.5,260.5 667.5,260.5 675.5,250.5 683.5,246.5 691.5,240.5 699.5,240.5 707.5,240.5 715.5,240.5 723.5,240.5 731.5,240.5 739.5,240.5 747.5,240.5 755.5,240.5 763.5,240.5 771.5,240.5 779.5,240.5 787.5,240.5 795.5,240.5 803.5,240.5 811.5,240.5 819.5,240.5 827.5,240.5 835.5,240.5 843.5,240.5 851.5,240.5 859.5,240.5 867.5,240.5 875.5,240.5 883.5,240.5 891.5,240.5 899.5,240.5 907.5,244.5 915.5,244.5 923.5,244.5 931.5,244.5 939.5,244.5" fill="none" stroke="#d8bfd8" stroke-width="1" stroke-dasharray="3 3" shape-rendering="crispEdges"/><polyline points="227.5,262.5 235.5,263.5 243.5,270.5 251.5,262.5 259.5,262.5 267.5,262.5 275.5,230.5 283.5,224.5 291.5,224.5 299.5,224.5 307.5,222.5 315.5,218.5 323.5,218.5 331.5,218.5 339.5,218.5 347.5,196.5 355.5,200.5 363.5,200.5 371.5,200.5 379.5,200.5 387.5,200.5 395.5,212.5 403.5,202.5 411.5,206.5 419.5,206.5 427.5,206.5 435.5,206.5 443.5,238.5 451.5,258.5 459.5,260.5 467.5,260.5 475.5,260.5 483.5,262.5 491.5,264.5 499.5,266.5 507.5,266.5 515.5,281.5 523.5,284.5 531.5,284.5 539.5,280.5 547.5,280.5 555.5,278.5 563.5,275.5 571.5,274.5 579.5,268.5 587.5,268.5 595.5,268.5 603.5,268.5 611.5,250.5 619.5,240.5 627.5,240.5 635.5,240.5 643.5,240.5 651.5,240.5 659.5,240.5 667.5,240.5 675.5,238.5 683.5,238.5 691.5,238.5 699.5,240.5 707.5,240.5 715.5,240.5 723.5,240.5 731.5,240.5 739.5,240.5 747.5,240.5 755.5,244.5 763.5,244.5 771.5,264.5 779.5,264.5 787.5,264.5 795.5,272.5 803.5,268.5 811.5,268.5 819.5,268.5 827.5,268.5 835.5,268.5 843.5,266.5 851.5,262.5 859.5,262.5 867.5,246.5 875.5,248.5 883.5,248.5 891.5,248.5 899.5,250.5 907.5,242.5 915.5,238.5 923.5,242.5" fill="none" stroke="#ff0000" stroke-width="1" shape-rendering="crispEdges"/><polyline points="227.5,298.5 235.5,298.5 243.5,298.5 251.5,298.5 259.5,290.5 267.5,272.5 275.5,233.5 283.5,224.5 291.5,224.5 299.5,224.5 307.5,224.5 315.5,224.5 323.5,224.5 331.5,224.5 339.5,224.5 347.5,224.5 355.5,224.5 363.5,224.5 371.5,224.5 379.5,224.5 387.5,224.5 395.5,224.5 403.5,224.5 411.5,224.5 419.5,224.5 427.5,224.5 435.5,224.5 443.5,223.5 451.5,238.5 459.5,238.5 467.5,240.5 475.5,240.5 483.5,240.5 491.5,244.5 499.5,244.5 507.5,244.5 515.5,244.5 523.5,244.5 531.5,256.5 539.5,256.5 547.5,260.5 555.5,260.5 563.5,260.5 571.5,260.5 579.5,260.5 587.5,260.5 595.5,260.5 603.5,260.5 611.5,260.5 619.5,262.5 627.5,264.5 635.5,265.5 643.5,266.5 651.5,266.5 659.5,266.5 667.5,266.5 675.5,262.5 683.5,262.5 691.5,260.5 699.5,258.5 707.5,258.5 715.5,252.5 723.5,252.5 731.5,252.5 739.5,252.5 747.5,252.5 755.5,240.5 763.5,240.5 771.5,260.5 779.5,260.5 787.5,260.5 795.5,260.5 803.5,260.5 811.5,260.5 819.5,260.5 827.5,260.5 835.5,260.5 843.5,260.5 851.5,260.5 859.5,260.5 867.5,260.5 875.5,260.5 883.5,260.5 891.5,264.5 899.5,264.5 907.5,264.5 915.5,260.5 923.5,260.5" fill="none" stroke="#0000ff" stroke-width="1" shape-rendering="crispEdges"/><polyline points="227.5,214.5 235.5,270.5 243.5,258.5 251.5,306.5 259.5,298.5 267.5,282.5 275.5,274.5 283.5,286.5 291.5,250.5 299.5,274.5 307.5,250.5 315.5,262.5 323.5,262.5 331.5,270.5 339.5,258.5 347.5,254.5 355.5,250.5 363.5,242.5 371.5,262.5 379.5,258.5 387.5,250.5 395.5,242.5 403.5,210.5 411.5,226.5 419.5,226.5 427.5,250.5 435.5,242.5 443.5,242.5 451.5,254.5 459.5,262.5 467.5,214.5 475.5,246.5 483.5,250.5 491.5,258.5 499.5,238.5 507.5,246.5 515.5,234.5 523.5,250.5 531.5,238.5 539.5,246.5 547.5,250.5 555.5,270.5 563.5,302.5 571.5,290.5 579.5,282.5 587.5,270.5 595.5,238.5 603.5,242.5 611.5,242.5 619.5,254.5 627.5,250.5 635.5,254.5 643.5,262.5 651.5,254.5 659.5,254.5 667.5,262.5 675.5,262.5 683.5,254.5 691.5,238.5 699.5,226.5 707.5,214.5 715.5,226.5" fill="none" stroke="#00ff00" stroke-width="1" shape-rendering="crispEdges"/><polyline points="227.5,303.5 235.5,299.5 243.5,298.5 251.5,297.5 259.5,295.0 267.5,293.2 275.5,290.7 283.5,288.9 291.5,287.5 299.5,286.8 307.5,286.0 315.5,284.1 323.5,281.1 331.5,279.6 339.5,275.6 347.5,268.5 355.5,261.7 363.5,257.5 371.5,253.0 379.5,247.0 387.5,243.5 395.5,241.5 403.5,238.0 411.5,235.5 419.5,233.7 427.5,231.3 435.5,229.5 443.5,227.7 451.5,227.1 459.5,225.5 467.5,223.4 475.5,222.5 483.5,220.7 491.5,219.9 499.5,219.9 507.5,222.2 515.5,225.0 523.5,229.8 531.5,235.3 539.5,239.5 547.5,243.9 555.5,247.3 563.5,250.0 571.5,252.1 579.5,252.6 587.5,253.7 595.5,254.9 603.5,256.1 611.5,256.7 619.5,256.7 627.5,256.7 635.5,256.7 643.5,256.7 651.5,256.7 659.5,256.7 667.5,256.7 675.5,253.1 683.5,251.5 691.5,250.1 699.5,248.9 707.5,248.9 715.5,247.7 723.5,247.7 731.5,247.7 739.5,247.7 747.5,248.0 755.5,247.5 763.5,247.7 771.5,247.9 779.5,247.0 787.5,246.2 795.5,246.5 803.5,247.1 811.5,246.0 819.5,246.3 827.5,247.8 835.5,251.2 843.5,254.3 851.5,256.4 859.5,256.6 867.5,256.7 875.5,256.5 883.5,256.1 891.5,255.2 899.5,255.4 907.5,255.7 915.5,255.7 923.5,255.7 931.5,255.8 939.5,256.0" fill="none" stroke="#0000ff" stroke-width="1" shape-rendering="crispEdges"/><polyline points="227.5,276.7 235.5,275.5 243.5,274.3 251.5,273.5 259.5,272.5 267.5,271.9 275.5,272.8 283.5,273.7 291.5,270.5 299.5,268.8 307.5,269.7 315.5,264.0 323.5,253.7 331.5,244.5 339.5,237.5 347.5,233.0 355.5,228.3 363.5,224.0 371.5,222.2 379.5,219.2 387.5,217.4 395.5,216.5 403.5,215.5 411.5,214.6 419.5,213.2 427.5,212.5 435.5,212.2 443.5,211.0 451.5,210.7 459.5,210.8 467.5,210.8 475.5,211.0 483.5,214.1 491.5,222.2 499.5,230.4 507.5,238.6 515.5,246.1 523.5,252.4 531.5,257.1 539.5,258.7 547.5,261.0 555.5,262.0 563.5,262.2 571.5,262.9 579.5,262.5 587.5,263.4 595.5,262.8 603.5,261.6 611.5,260.0 619.5,260.0 627.5,260.0 635.5,260.0 643.5,258.5 651.5,254.9 659.5,250.7 667.5,248.6 675.5,247.9 683.5,246.5 691.5,245.5 699.5,245.5 707.5,246.9 715.5,247.3 723.5,247.3 731.5,247.3 739.5,247.1 747.5,245.9 755.5,245.5 763.5,245.3 771.5,245.3 779.5,245.5 787.5,245.9 795.5,246.2 803.5,247.1 811.5,252.8 819.5,258.5 827.5,261.7 835.5,263.4 843.5,262.8 851.5,262.2 859.5,259.8 867.5,256.7 875.5,255.9 883.5,255.9 891.5,256.1 899.5,257.1 907.5,257.3 915.5,257.6 923.5,258.0 931.5,257.5 939.5,256.7" fill="none" stroke="#ff0000" stroke-width="1" shape-rendering="crispEdges"/><polyline points="227.5,269.5 235.5,268.5 243.5,268.0 251.5,267.5 259.5,268.5 267.5,268.2 275.5,266.8 283.5,265.8 291.5,266.8 299.5,258.5 307.5,241.5 315.5,230.1 323.5,222.3 331.5,218.6 339.5,215.0 347.5,211.5 355.5,209.5 363.5,208.9 371.5,208.5 379.5,208.7 387.5,208.9 395.5,209.3 403.5,208.5 411.5,208.3 419.5,208.2 427.5,208.1 435.5,206.9 443.5,207.0 451.5,207.5 459.5,207.7 467.5,215.3 475.5,225.5 483.5,238.9 491.5,247.5 499.5,260.0 507.5,266.5 515.5,270.7 523.5,271.7 531.5,273.2 539.5,271.3 547.5,269.3 555.5,268.9 563.5,268.9 571.5,269.5 579.5,267.7 587.5,264.5 595.5,261.5 603.5,260.0 611.5,260.0 619.5,260.2 627.5,257.4 635.5,253.7 643.5,245.3 651.5,242.6 659.5,242.7 667.5,242.8 675.5,240.5 683.5,242.2 691.5,244.0 699.5,244.7 707.5,243.3 715.5,245.3 723.5,246.2 731.5,247.1 739.5,246.5 747.5,243.4 755.5,243.8 763.5,244.3 771.5,243.8 779.5,244.7 787.5,247.7 795.5,256.1 803.5,264.6 811.5,268.8 819.5,271.9 827.5,267.1 835.5,262.3 843.5,258.5 851.5,256.4 859.5,255.5 867.5,255.9 875.5,256.4 883.5,256.7 891.5,257.3 899.5,258.0 907.5,257.6 915.5,257.3 923.5,255.5 931.5,250.7 939.5,246.2" fill="none" stroke="#00ff00" stroke-width="1" shape-rendering="crispEdges"/></g><g shape-rendering="crispEdges"><rect x="227" y="400" width="1" height="12" fill="#008000"/><rect x="235" y="400" width="1" height="12" fill="#008000"/><rect x="243" y="400" width="1" height="12" fill="#ff0000"/><rect x="251" y="400" width="1" height="8" fill="#008000"/><rect x="259" y="400" width="1" height="1" fill="#008000"/><rect x="267" y="400" width="1" height="1" fill="#ff0000"/><rect x="275" y="388" width="1" height="13" fill="#008000"/><rect x="283" y="367" width="1" height="34" fill="#008000"/><rect x="291" y="361" width="1" height="40" fill="#008000"/><rect x="299" y="361" width="1" height="40" fill="#008000"/><rect x="307" y="362" width="1" height="39" fill="#ff0000"/><rect x="315" y="376" width="1" height="25" fill="#ff0000"/><rect x="323" y="400" width="1" height="1" fill="#ff0000"/><rect x="331" y="400" width="1" height="20" fill="#ff0000"/><rect x="339" y="400" width="1" height="24" fill="#ff0000"/><rect x="347" y="400" width="1" height="20" fill="#008000"/><rect x="355" y="400" width="1" height="17" fill="#008000"/><rect x="363" y="400" width="1" height="20" fill="#ff0000"/><rect x="371" y="400" width="1" height="14" fill="#008000"/><rect x="379" y="400" width="1" height="12" fill="#008000"/><rect x="387" y="400" width="1" height="9" fill="#008000"/><rect x="395" y="400" width="1" height="8" fill="#008000"/><rect x="403" y="400" width="1" height="5" fill="#008000"/><rect x="411" y="400" width="1" height="5" fill="#008000"/><rect x="419" y="400" width="1" height="5" fill="#ff0000"/><rect x="427" y="400" width="1" height="8" fill="#ff0000"/><rect x="435" y="400" width="1" height="8" fill="#ff0000"/><rect x="443" y="400" width="1" height="18" fill="#ff0000"/><rect x="451" y="400" width="1" height="37" fill="#ff0000"/><rect x="459" y="400" width="1" height="52" fill="#ff0000"/><rect x="467" y="400" width="1" height="64" fill="#ff0000"/><rect x="475" y="400" width="1" height="67" fill="#ff0000"/><rect x="483" y="400" width="1" height="56" fill="#008000"/><rect x="491" y="400" width="1" height="35" fill="#008000"/><rect x="499" y="400" width="1" height="12" fill="#008000"/><rect x="507" y="396" width="1" height="5" fill="#008000"/><rect x="515" y="386" width="1" height="15" fill="#008000"/><rect x="523" y="377" width="1" height="24" fill="#008000"/><rect x="531" y="378" width="1" height="23" fill="#ff0000"/><rect x="539" y="384" width="1" height="17" fill="#ff0000"/><rect x="547" y="389" width="1" height="12" fill="#ff0000"/><rect x="555" y="388" width="1" height="13" fill="#008000"/><rect x="563" y="388" width="1" height="13" fill="#008000"/><rect x="571" y="383" width="1" height="18" fill="#008000"/><rect x="579" y="383" width="1" height="18" fill="#008000"/><rect x="587" y="383" width="1" height="18" fill="#008000"/><rect x="595" y="387" width="1" height="14" fill="#ff0000"/><rect x="603" y="393" width="1" height="8" fill="#ff0000"/><rect x="611" y="389" width="1" height="12" fill="#008000"/><rect x="619" y="381" width="1" height="20" fill="#008000"/><rect x="627" y="374" width="1" height="27" fill="#008000"/><rect x="635" y="377" width="1" height="24" fill="#ff0000"/><rect x="643" y="381" width="1" height="20" fill="#ff0000"/><rect x="651" y="391" width="1" height="10" fill="#ff0000"/><rect x="659" y="400" width="1" height="4" fill="#ff0000"/><rect x="667" y="400" width="1" height="12" fill="#ff0000"/><rect x="675" y="400" width="1" height="8" fill="#008000"/><rect x="683" y="399" width="1" height="2" fill="#008000"/><rect x="691" y="400" width="1" height="1" fill="#008000"/><rect x="699" y="400" width="1" height="1" fill="#008000"/><rect x="707" y="395" width="1" height="6" fill="#008000"/><rect x="715" y="398" width="1" height="3" fill="#ff0000"/><rect x="723" y="400" width="1" height="1" fill="#ff0000"/><rect x="731" y="400" width="1" height="1" fill="#ff0000"/><rect x="739" y="400" width="1" height="1" fill="#ff0000"/><rect x="747" y="400" width="1" height="1" fill="#ff0000"/><rect x="755" y="400" width="1" height="5" fill="#ff0000"/><rect x="763" y="400" width="1" height="15" fill="#ff0000"/><rect x="771" y="400" width="1" height="25" fill="#ff0000"/><rect x="779" y="400" width="1" height="34" fill="#ff0000"/><rect x="787" y="400" width="1" height="34" fill="#ff0000"/><rect x="795" y="400" width="1" height="31" fill="#008000"/><rect x="803" y="400" width="1" height="14" fill="#008000"/><rect x="811" y="392" width="1" height="9" fill="#008000"/><rect x="819" y="374" width="1" height="27" fill="#008000"/><rect x="827" y="368" width="1" height="33" fill="#008000"/><rect x="835" y="371" width="1" height="30" fill="#ff0000"/><rect x="843" y="387" width="1" height="14" fill="#ff0000"/><rect x="851" y="400" width="1" height="1" fill="#ff0000"/><rect x="859" y="400" width="1" height="8" fill="#ff0000"/><rect x="867" y="400" width="1" height="12" fill="#ff0000"/><rect x="875" y="400" width="1" height="8" fill="#008000"/><rect x="883" y="400" width="1" height="4" fill="#008000"/><rect x="891" y="400" width="1" height="1" fill="#008000"/><rect x="899" y="394" width="1" height="7" fill="#008000"/><rect x="907" y="389" width="1" height="12" fill="#008000"/><rect x="915" y="380" width="1" height="21" fill="#008000"/><rect x="923" y="381" width="1" height="20" fill="#ff0000"/><rect x="226.500" y="108.500" width="716" height="243" fill="none" stroke="#fff" stroke-width="1"/><rect x="226.500" y="353.500" width="716" height="120" fill="none" stroke="#fff" stroke-width="1"/><rect x="943" y="130" width="2" height="1" fill="#fff"/><rect x="943" y="170" width="2" height="1" fill="#fff"/><rect x="943" y="210" width="2" height="1" fill="#fff"/><rect x="943" y="250" width="2" height="1" fill="#fff"/><rect x="943" y="290" width="2" height="1" fill="#fff"/><rect x="943" y="330" width="2" height="1" fill="#fff"/><rect x="943" y="355" width="1" height="1" fill="#fff"/><rect x="943" y="400" width="1" height="1" fill="#fff"/><rect x="943" y="472" width="1" height="1" fill="#fff"/><rect x="227" y="474" width="1" height="3" fill="#fff"/><rect x="291" y="474" width="1" height="3" fill="#fff"/><rect x="355" y="474" width="1" height="3" fill="#fff"/><rect x="419" y="474" width="1" height="3" fill="#fff"/><rect x="483" y="474" width="1" height="3" fill="#fff"/><rect x="547" y="474" width="1" height="3" fill="#fff"/><rect x="611" y="474" width="1" height="3" fill="#fff"/><rect x="675" y="474" width="1" height="3" fill="#fff"/><rect x="739" y="474" width="1" height="3" fill="#fff"/><rect x="803" y="474" width="1" height="3" fill="#fff"/><rect x="867" y="474" width="1" height="3" fill="#fff"/><rect x="944" y="220" width="36" height="11" fill="#fff"/></g></svg>
<span class="t" style="left:948.30px;top:124px;font-family:'DejaVu Sans Condensed','Liberation Sans',sans-serif;font-size:9.5px;line-height:11px;color:#fff;letter-spacing:-0.459px;">1.5225</span>
<span class="t" style="left:948.30px;top:164px;font-family:'DejaVu Sans Condensed','Liberation Sans',sans-serif;font-size:9.5px;line-height:11px;color:#fff;letter-spacing:-0.459px;">1.5215</span>
<span class="t" style="left:948.30px;top:204px;font-family:'DejaVu Sans Condensed','Liberation Sans',sans-serif;font-size:9.5px;line-height:11px;color:#fff;letter-spacing:-0.459px;">1.5205</span>
<span class="t" style="left:948.30px;top:244px;font-family:'DejaVu Sans Condensed','Liberation Sans',sans-serif;font-size:9.5px;line-height:11px;color:#fff;letter-spacing:-0.459px;">1.5195</span>
<span class="t" style="left:948.30px;top:284px;font-family:'DejaVu Sans Condensed','Liberation Sans',sans-serif;font-size:9.5px;line-height:11px;color:#fff;letter-spacing:-0.459px;">1.5185</span>
<span class="t" style="left:948.30px;top:324px;font-family:'DejaVu Sans Condensed','Liberation Sans',sans-serif;font-size:9.5px;line-height:11px;color:#fff;letter-spacing:-0.459px;">1.5175</span>
<span class="t" style="left:948.30px;top:220px;font-family:'DejaVu Sans Condensed','Liberation Sans',sans-serif;font-size:9.5px;line-height:11px;color:#000;letter-spacing:-0.459px;">1.5201</span>
<div style="left:943px;top:350px;width:39px;height:130px;overflow:hidden">
<span class="t" style="left:3.00px;top:6px;font-family:'DejaVu Sans Condensed','Liberation Sans',sans-serif;font-size:9px;line-height:10px;color:#fff;letter-spacing:-0.232px;">0.000541</span>
<span class="t" style="left:3.00px;top:45px;font-family:'DejaVu Sans Condensed','Liberation Sans',sans-serif;font-size:9px;line-height:10px;color:#fff;letter-spacing:-0.174px;">0.00</span>
<span class="t" style="left:3.00px;top:112px;font-family:'DejaVu Sans Condensed','Liberation Sans',sans-serif;font-size:9px;line-height:10px;color:#fff;letter-spacing:-0.057px;">-0.00086</span>
</div>
<div style="left:230px;top:111px;width:190px;height:12px;background:#000;"></div>
<div style="left:230px;top:357px;width:58px;height:12px;background:#000;"></div>
<span class="t" style="left:231.00px;top:112px;font-family:'DejaVu Sans Condensed','Liberation Sans',sans-serif;font-size:9px;line-height:10px;color:#fff;letter-spacing:0.625px;">GBPUSD,M15</span>
<span class="t" style="left:297.50px;top:112px;font-family:'DejaVu Sans Condensed','Liberation Sans',sans-serif;font-size:9px;line-height:10px;color:#fff;letter-spacing:-0.165px;">1.5203</span>
<span class="t" style="left:328.50px;top:112px;font-family:'DejaVu Sans Condensed','Liberation Sans',sans-serif;font-size:9px;line-height:10px;color:#fff;letter-spacing:-0.165px;">1.5205</span>
<span class="t" style="left:359.50px;top:112px;font-family:'DejaVu Sans Condensed','Liberation Sans',sans-serif;font-size:9px;line-height:10px;color:#fff;letter-spacing:-0.165px;">1.5189</span>
<span class="t" style="left:390.50px;top:112px;font-family:'DejaVu Sans Condensed','Liberation Sans',sans-serif;font-size:9px;line-height:10px;color:#fff;letter-spacing:-0.165px;">1.5201</span>
<span class="t" style="left:231.00px;top:359px;font-family:'DejaVu Sans Condensed','Liberation Sans',sans-serif;font-size:9px;line-height:10px;color:#fff;letter-spacing:0.277px;">AC 0.000243</span>
<span class="t" style="left:226.00px;top:478px;font-family:'DejaVu Sans Condensed','Liberation Sans',sans-serif;font-size:9px;line-height:10px;color:#fff;letter-spacing:0.068px;">29 Mar 2013</span>
<span class="t" style="left:290.00px;top:478px;font-family:'DejaVu Sans Condensed','Liberation Sans',sans-serif;font-size:9px;line-height:10px;color:#fff;letter-spacing:0.086px;">29 Mar 04:00</span>
<span class="t" style="left:354.00px;top:478px;font-family:'DejaVu Sans Condensed','Liberation Sans',sans-serif;font-size:9px;line-height:10px;color:#fff;letter-spacing:0.086px;">29 Mar 06:00</span>
<span class="t" style="left:418.00px;top:478px;font-family:'DejaVu Sans Condensed','Liberation Sans',sans-serif;font-size:9px;line-height:10px;color:#fff;letter-spacing:0.086px;">29 Mar 08:00</span>
<span class="t" style="left:482.00px;top:478px;font-family:'DejaVu Sans Condensed','Liberation Sans',sans-serif;font-size:9px;line-height:10px;color:#fff;letter-spacing:0.086px;">29 Mar 10:00</span>
<span class="t" style="left:546.00px;top:478px;font-family:'DejaVu Sans Condensed','Liberation Sans',sans-serif;font-size:9px;line-height:10px;color:#fff;letter-spacing:0.086px;">29 Mar 12:00</span>
<span class="t" style="left:610.00px;top:478px;font-family:'DejaVu Sans Condensed','Liberation Sans',sans-serif;font-size:9px;line-height:10px;color:#fff;letter-spacing:0.086px;">29 Mar 14:00</span>
<span class="t" style="left:674.00px;top:478px;font-family:'DejaVu Sans Condensed','Liberation Sans',sans-serif;font-size:9px;line-height:10px;color:#fff;letter-spacing:0.086px;">29 Mar 16:00</span>
<span class="t" style="left:738.00px;top:478px;font-family:'DejaVu Sans Condensed','Liberation Sans',sans-serif;font-size:9px;line-height:10px;color:#fff;letter-spacing:0.086px;">29 Mar 18:00</span>
<span class="t" style="left:802.00px;top:478px;font-family:'DejaVu Sans Condensed','Liberation Sans',sans-serif;font-size:9px;line-height:10px;color:#fff;letter-spacing:0.086px;">29 Mar 20:00</span>
<span class="t" style="left:866.00px;top:478px;font-family:'DejaVu Sans Condensed','Liberation Sans',sans-serif;font-size:9px;line-height:10px;color:#fff;letter-spacing:0.086px;">29 Mar 22:00</span>
<div style="left:222px;top:491px;width:762px;height:2px;background:#fff;"></div>
<div style="left:224px;top:494px;width:760px;height:18px;background:#f0f0f0;"></div>
<div style="left:224px;top:493px;width:760px;height:1px;background:#000;"></div>
<div style="left:224px;top:494px;width:759px;height:1px;background:#fff;"></div>
<span class="t" style="left:237.00px;top:496px;font-family:'DejaVu Sans Condensed','Liberation Sans',sans-serif;font-size:11px;line-height:13px;color:#6c7386;letter-spacing:-0.144px;">EURUSD,M15</span>
<div style="left:314px;top:496px;width:1px;height:13px;background:#555;"></div>
<span class="t" style="left:325.00px;top:496px;font-family:'DejaVu Sans Condensed','Liberation Sans',sans-serif;font-size:11px;line-height:13px;color:#6c7386;letter-spacing:-0.236px;">#AAPL,M15</span>
<div style="left:394px;top:496px;width:1px;height:13px;background:#555;"></div>
<span class="t" style="left:404.00px;top:496px;font-family:'DejaVu Sans Condensed','Liberation Sans',sans-serif;font-size:11px;line-height:13px;color:#6c7386;letter-spacing:0.210px;">USDJPY,M15</span>
<div style="left:478px;top:493px;width:84px;height:19px;background:#fff;border:1px solid #000;border-top:none;box-sizing:border-box;"></div>
<div style="left:562px;top:494px;width:1px;height:18px;background:#4a4a4a;"></div>
<div style="left:479px;top:493px;width:82px;height:1px;background:#fff;"></div>
<span class="t" style="left:487.50px;top:496px;font-family:'DejaVu Sans Condensed','Liberation Sans',sans-serif;font-size:11px;line-height:13px;color:#000;letter-spacing:-0.261px;">GBPUSD,M15</span>
<svg class="i" style="left:954px;top:498px;" width="26" height="10" viewBox="0 0 26 10"><path d="M5.500 1 v8 l-4 -4 z M19.500 1 v8 l4 -4 z" fill="#9a9a9a"/></svg>
<svg class="i" style="left:12px;top:520px;shape-rendering:crispEdges;" width="7" height="6" viewBox="0 0 7 6"><rect x="0" y="0" width="2" height="1"/><rect x="5" y="0" width="2" height="1"/><rect x="1" y="1" width="2" height="1"/><rect x="4" y="1" width="2" height="1"/><rect x="2" y="2" width="3" height="1"/><rect x="2" y="3" width="3" height="1"/><rect x="1" y="4" width="2" height="1"/><rect x="4" y="4" width="2" height="1"/><rect x="0" y="5" width="2" height="1"/><rect x="5" y="5" width="2" height="1"/></svg>
<div style="left:9px;top:531px;width:13px;height:103px;background:linear-gradient(#b6cfeb,#a4bfe1 40%,#90afd6 75%,#88a8d1);"></div>
<span class="t" style="left:9px;top:632px;width:44px;height:13px;transform-origin:0 0;transform:rotate(-90deg);font-family:'DejaVu Sans Condensed','Liberation Sans',sans-serif;font-size:11px;line-height:13px;color:#0b1226;padding-left:0.5px;letter-spacing:0.05px">Terminal</span>
<div style="left:23px;top:517px;width:958px;height:96px;background:#fff;border:1px solid #a9a9a9;border-bottom:none;border-right-color:#f8f8f8;box-sizing:border-box;"></div>
<div style="left:24px;top:518px;width:956px;height:22px;background:linear-gradient(#fff 40%,#f3f4f6 41%,#f0f1f3);"></div>
<div style="left:24px;top:540px;width:956px;height:1px;background:#d4d4d4;"></div>
<span class="t" style="left:30.00px;top:524px;font-family:'DejaVu Sans Condensed','Liberation Sans',sans-serif;font-size:11px;line-height:13px;color:#000;letter-spacing:0.475px;">Order</span>
<span class="t" style="left:188.00px;top:524px;font-family:'DejaVu Sans Condensed','Liberation Sans',sans-serif;font-size:11px;line-height:13px;color:#000;letter-spacing:-0.062px;">Time</span>
<span class="t" style="left:238.00px;top:524px;font-family:'DejaVu Sans Condensed','Liberation Sans',sans-serif;font-size:11px;line-height:13px;color:#000;letter-spacing:0.480px;">Type</span>
<span class="t" style="left:281.00px;top:524px;font-family:'DejaVu Sans Condensed','Liberation Sans',sans-serif;font-size:11px;line-height:13px;color:#000;letter-spacing:-0.106px;">Size</span>
<span class="t" style="left:314.00px;top:524px;font-family:'DejaVu Sans Condensed','Liberation Sans',sans-serif;font-size:11px;line-height:13px;color:#000;letter-spacing:0.027px;">Symbol</span>
<span class="t" style="left:381.00px;top:524px;font-family:'DejaVu Sans Condensed','Liberation Sans',sans-serif;font-size:11px;line-height:13px;color:#000;letter-spacing:0.220px;">Price</span>
<span class="t" style="left:440.00px;top:524px;font-family:'DejaVu Sans Condensed','Liberation Sans',sans-serif;font-size:11px;line-height:13px;color:#000;letter-spacing:-0.104px;">S / L</span>
<span class="t" style="left:495.00px;top:524px;font-family:'DejaVu Sans Condensed','Liberation Sans',sans-serif;font-size:11px;line-height:13px;color:#000;letter-spacing:0.093px;">T / P</span>
<span class="t" style="left:546.00px;top:524px;font-family:'DejaVu Sans Condensed','Liberation Sans',sans-serif;font-size:11px;line-height:13px;color:#000;letter-spacing:0.220px;">Price</span>
<span class="t" style="left:585.00px;top:524px;font-family:'DejaVu Sans Condensed','Liberation Sans',sans-serif;font-size:11px;line-height:13px;color:#000;letter-spacing:-0.112px;">Comm...</span>
<span class="t" style="left:653.00px;top:524px;font-family:'DejaVu Sans Condensed','Liberation Sans',sans-serif;font-size:11px;line-height:13px;color:#000;letter-spacing:0.238px;">Taxes</span>
<span class="t" style="left:710.00px;top:524px;font-family:'DejaVu Sans Condensed','Liberation Sans',sans-serif;font-size:11px;line-height:13px;color:#000;letter-spacing:-0.242px;">Swap</span>
<span class="t" style="left:769.00px;top:524px;font-family:'DejaVu Sans Condensed','Liberation Sans',sans-serif;font-size:11px;line-height:13px;color:#000;letter-spacing:0.447px;">Profit</span>
<span class="t" style="left:925.00px;top:524px;font-family:'DejaVu Sans Condensed','Liberation Sans',sans-serif;font-size:11px;line-height:13px;color:#000;letter-spacing:0.085px;">Comment</span>
<div style="left:94px;top:518px;width:1px;height:22px;background:#e6e6e6;"></div>
<div style="left:95px;top:518px;width:1px;height:22px;background:#fff;"></div>
<div style="left:216px;top:518px;width:1px;height:22px;background:#e6e6e6;"></div>
<div style="left:217px;top:518px;width:1px;height:22px;background:#fff;"></div>
<div style="left:266px;top:518px;width:1px;height:22px;background:#e6e6e6;"></div>
<div style="left:267px;top:518px;width:1px;height:22px;background:#fff;"></div>
<div style="left:305px;top:518px;width:1px;height:22px;background:#e6e6e6;"></div>
<div style="left:306px;top:518px;width:1px;height:22px;background:#fff;"></div>
<div style="left:355px;top:518px;width:1px;height:22px;background:#e6e6e6;"></div>
<div style="left:356px;top:518px;width:1px;height:22px;background:#fff;"></div>
<div style="left:410px;top:518px;width:1px;height:22px;background:#e6e6e6;"></div>
<div style="left:411px;top:518px;width:1px;height:22px;background:#fff;"></div>
<div style="left:465px;top:518px;width:1px;height:22px;background:#e6e6e6;"></div>
<div style="left:466px;top:518px;width:1px;height:22px;background:#fff;"></div>
<div style="left:521px;top:518px;width:1px;height:22px;background:#e6e6e6;"></div>
<div style="left:522px;top:518px;width:1px;height:22px;background:#fff;"></div>
<div style="left:575px;top:518px;width:1px;height:22px;background:#e6e6e6;"></div>
<div style="left:576px;top:518px;width:1px;height:22px;background:#fff;"></div>
<div style="left:630px;top:518px;width:1px;height:22px;background:#e6e6e6;"></div>
<div style="left:631px;top:518px;width:1px;height:22px;background:#fff;"></div>
<div style="left:685px;top:518px;width:1px;height:22px;background:#e6e6e6;"></div>
<div style="left:686px;top:518px;width:1px;height:22px;background:#fff;"></div>
<div style="left:740px;top:518px;width:1px;height:22px;background:#e6e6e6;"></div>
<div style="left:741px;top:518px;width:1px;height:22px;background:#fff;"></div>
<div style="left:801px;top:518px;width:1px;height:22px;background:#e6e6e6;"></div>
<div style="left:802px;top:518px;width:1px;height:22px;background:#fff;"></div>
<svg class="i" style="left:71px;top:526px;" width="10" height="8" viewBox="0 0 10 8"><path d="M1 7.500 L5 0.500" stroke="#9a9a9a" stroke-width="1"/><path d="M5 0.500 L9 7.500 h-8" stroke="#fff" stroke-width="1" fill="none"/></svg>
<div style="left:24px;top:542px;width:956px;height:20px;background:#c8c8c8;"></div>
<svg class="i" style="left:30px;top:547px;" width="10" height="10" viewBox="0 0 10 10"><circle cx="5" cy="5" r="3.600" fill="#bdbdbd" stroke="#808080" stroke-width="1"/><path d="M3 6.500 a3 3 0 0 0 4 0" stroke="#e8e8e8" fill="none" stroke-width="0.8"/></svg>
<span class="t" style="left:49.00px;top:546px;font-family:'DejaVu Sans Condensed','Liberation Sans',sans-serif;font-size:11px;line-height:13px;color:#000;font-weight:bold;letter-spacing:-0.649px;">Balance: 230.97  Equity: 230.97  Free margin: 230.97</span>
<span class="t" style="left:778.00px;top:546px;font-family:'DejaVu Sans Condensed','Liberation Sans',sans-serif;font-size:11px;line-height:13px;color:#000;font-weight:bold;letter-spacing:-1.139px;">0.00</span>
<div style="left:24px;top:613px;width:957px;height:1px;background:#000;"></div>
<div style="left:26px;top:613px;width:48px;height:18px;background:#fff;border:1px solid #000;border-top:none;box-sizing:border-box;"></div>
<div style="left:74px;top:614px;width:1px;height:17px;background:#4a4a4a;"></div>
<span class="t" style="left:35.00px;top:616px;font-family:'DejaVu Sans Condensed','Liberation Sans',sans-serif;font-size:11px;line-height:13px;color:#000;letter-spacing:0.267px;">Trade</span>
<span class="t" style="left:84.00px;top:617px;font-family:'DejaVu Sans Condensed','Liberation Sans',sans-serif;font-size:11px;line-height:13px;color:#6c7386;letter-spacing:-0.234px;">Account History</span>
<span class="t" style="left:179.00px;top:617px;font-family:'DejaVu Sans Condensed','Liberation Sans',sans-serif;font-size:11px;line-height:13px;color:#6c7386;letter-spacing:-0.081px;">News</span>
<span class="t" style="left:226.00px;top:617px;font-family:'DejaVu Sans Condensed','Liberation Sans',sans-serif;font-size:11px;line-height:13px;color:#6c7386;letter-spacing:-0.142px;">Alerts</span>
<span class="t" style="left:273.00px;top:617px;font-family:'DejaVu Sans Condensed','Liberation Sans',sans-serif;font-size:11px;line-height:13px;color:#6c7386;letter-spacing:-0.243px;">Mailbox</span>
<span class="t" style="left:330.00px;top:617px;font-family:'DejaVu Sans Condensed','Liberation Sans',sans-serif;font-size:11px;line-height:13px;color:#6c7386;letter-spacing:0.049px;">Journal</span>
<div style="left:170px;top:617px;width:1px;height:12px;background:#555;"></div>
<div style="left:216px;top:617px;width:1px;height:12px;background:#555;"></div>
<div style="left:263px;top:617px;width:1px;height:12px;background:#555;"></div>
<div style="left:320px;top:617px;width:1px;height:12px;background:#555;"></div>
<div style="left:374px;top:617px;width:1px;height:12px;background:#555;"></div>
<div style="left:8px;top:636px;width:976px;height:1px;background:#a0a0a0;"></div>
<div style="left:8px;top:637px;width:976px;height:1px;background:#fbfbfb;"></div>
<span class="t" style="left:10.00px;top:643px;font-family:'DejaVu Sans Condensed','Liberation Sans',sans-serif;font-size:11px;line-height:13px;color:#000;letter-spacing:0.144px;">For Help, press F1</span>
<span class="t" style="left:264.00px;top:643px;font-family:'DejaVu Sans Condensed','Liberation Sans',sans-serif;font-size:11px;line-height:13px;color:#000;letter-spacing:0.190px;">IFX One Click Trading</span>
<div style="left:258px;top:641px;width:1px;height:15px;background:#9a9a9a;"></div>
<div style="left:259px;top:641px;width:1px;height:15px;background:#fff;"></div>
<div style="left:374px;top:641px;width:1px;height:15px;background:#9a9a9a;"></div>
<div style="left:375px;top:641px;width:1px;height:15px;background:#fff;"></div>
<div style="left:476px;top:641px;width:1px;height:15px;background:#9a9a9a;"></div>
<div style="left:477px;top:641px;width:1px;height:15px;background:#fff;"></div>
<div style="left:547px;top:641px;width:1px;height:15px;background:#9a9a9a;"></div>
<div style="left:548px;top:641px;width:1px;height:15px;background:#fff;"></div>
<div style="left:618px;top:641px;width:1px;height:15px;background:#9a9a9a;"></div>
<div style="left:619px;top:641px;width:1px;height:15px;background:#fff;"></div>
<div style="left:686px;top:641px;width:1px;height:15px;background:#9a9a9a;"></div>
<div style="left:687px;top:641px;width:1px;height:15px;background:#fff;"></div>
<div style="left:756px;top:641px;width:1px;height:15px;background:#9a9a9a;"></div>
<div style="left:757px;top:641px;width:1px;height:15px;background:#fff;"></div>
<div style="left:822px;top:641px;width:1px;height:15px;background:#9a9a9a;"></div>
<div style="left:823px;top:641px;width:1px;height:15px;background:#fff;"></div>
<svg class="i" style="left:828px;top:643px;shape-rendering:crispEdges;" width="23" height="12" viewBox="0 0 23 12"><rect x="0" y="0" width="2" height="9" fill="#4f6b00"/><rect x="0" y="10" width="2" height="2" fill="#003a5c"/><rect x="3" y="0" width="2" height="8" fill="#4f6b00"/><rect x="3" y="9" width="2" height="3" fill="#003a5c"/><rect x="6" y="0" width="2" height="7" fill="#4f6b00"/><rect x="6" y="8" width="2" height="4" fill="#003a5c"/><rect x="9" y="0" width="2" height="6" fill="#4f6b00"/><rect x="9" y="7" width="2" height="5" fill="#003a5c"/><rect x="12" y="0" width="2" height="5" fill="#4f6b00"/><rect x="12" y="6" width="2" height="6" fill="#003a5c"/><rect x="15" y="0" width="2" height="4" fill="#4f6b00"/><rect x="15" y="5" width="2" height="7" fill="#003a5c"/><rect x="18" y="0" width="2" height="3" fill="#4f6b00"/><rect x="18" y="4" width="2" height="8" fill="#003a5c"/><rect x="21" y="0" width="2" height="2" fill="#4f6b00"/><rect x="21" y="3" width="2" height="9" fill="#003a5c"/></svg>
<span class="t" style="left:891.00px;top:643px;font-family:'DejaVu Sans Condensed','Liberation Sans',sans-serif;font-size:11px;line-height:13px;color:#000;letter-spacing:0.020px;">40/3 kb</span>
<svg class="i" style="left:970px;top:645px;overflow:hidden;" width="14" height="13" viewBox="0 0 14 13"><path d="M1.500 13 L14 0.500 M5.500 13 L14 4.500 M9.500 13 L14 8.500 M13.200 13 L14 12.200" stroke="#fff" stroke-width="2.200"/><path d="M-0.200 13 L12.800 0 M3.800 13 L14 2.800 M7.800 13 L14 6.800 M11.800 13 L14 10.800" stroke="#a3a3a3" stroke-width="1.100"/></svg>
</div></body></html>
